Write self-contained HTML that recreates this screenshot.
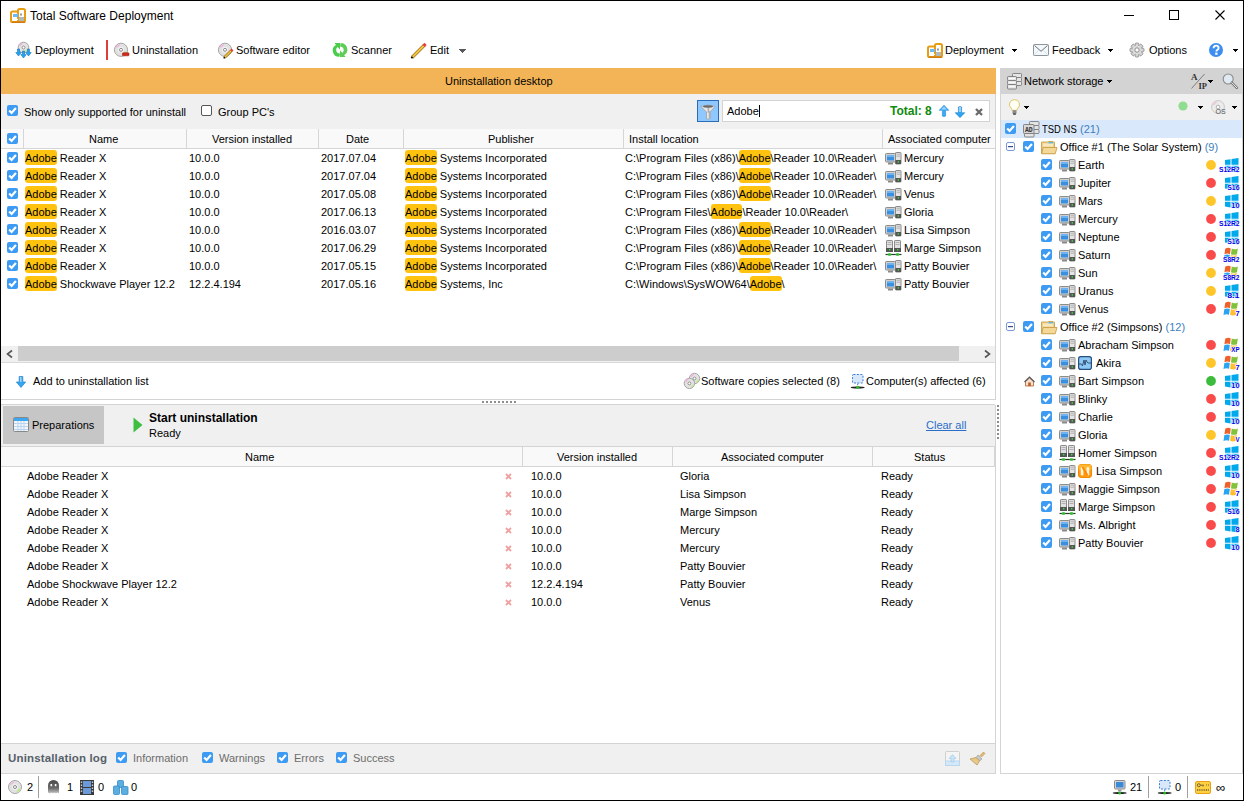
<!DOCTYPE html>
<html><head><meta charset="utf-8"><title>Total Software Deployment</title>
<style>
html,body{margin:0;padding:0;width:1244px;height:801px;overflow:hidden;background:#fff}
body{position:relative;font-family:"Liberation Sans", sans-serif;}
.r{position:absolute;box-sizing:content-box}
.t{position:absolute;white-space:nowrap;font-family:"Liberation Sans", sans-serif}
.hl{background:#ffc20e;border-radius:3px;padding:2px 0 1px 0}
svg{overflow:visible}
</style></head><body>
<div class="r" style="left:0px;top:0px;width:1244px;height:801px;background:#fff;"></div><svg class="r" style="left:10px;top:8px" width="16" height="15" viewBox="0 0 16 15"><rect x="1" y="3.5" width="8" height="10.5" rx="1.6" fill="#fff" stroke="#e89c12" stroke-width="2"/><rect x="8" y="1" width="7" height="13" rx="1.6" fill="#fff" stroke="#e89c12" stroke-width="2"/><rect x="3" y="6" width="5" height="3" fill="#6fb8f5"/><rect x="3" y="11" width="5" height="1" fill="#fff"/><rect x="10" y="5.5" width="2" height="2" fill="#999"/><rect x="9" y="9" width="5" height="4" fill="#b0b8c0"/><path d="M2 14.2 H15" stroke="#c86a10" stroke-width="1"/></svg><div class="t " style="left:30px;top:10px;font-size:12px;line-height:12px;color:#000;font-weight:normal;">Total Software Deployment</div><div class="r" style="left:1124px;top:15px;width:10px;height:1px;background:#000;"></div><div class="r" style="left:1169px;top:10px;width:8px;height:8px;border:1px solid #000"></div><svg class="r" style="left:1215px;top:10px" width="10" height="10" viewBox="0 0 10 10"><path d="M0.5 0.5 L9.5 9.5 M9.5 0.5 L0.5 9.5" stroke="#000" stroke-width="1.1"/></svg><svg class="r" style="left:14px;top:40px" width="20" height="20" viewBox="0 0 20 20"><circle cx="9.5" cy="7.5" r="5.3" fill="#e2e2e2" stroke="#a6a6a6" stroke-width="1"/><path d="M5.525 5.6450000000000005 L8.44 3.26" stroke="#f0b8e0" stroke-width="1.6"/><path d="M11.09 11.475 L13.74 8.825" stroke="#bfe890" stroke-width="1.6"/><circle cx="9.5" cy="7.5" r="2.226" fill="#f6f6f6"/><circle cx="9.5" cy="7.5" r="1.5" fill="#fff" stroke="#8a8a8a" stroke-width="1"/><g fill="#1ea6f0" stroke="#1c74c4" stroke-width="0.6"><path d="M3.5 9 H5.5 V12.5 H7.2 L4.5 16 L1.8 12.5 H3.5 Z"/><path d="M13.5 9 H15.5 V12.5 H17.2 L14.5 16 L11.8 12.5 H13.5 Z"/><path d="M8.5 11 H10.5 V14.5 H12.2 L9.5 18 L6.8 14.5 H8.5 Z"/></g></svg><div class="t " style="left:35px;top:45px;font-size:11px;line-height:11px;color:#000;font-weight:normal;">Deployment</div><div class="r" style="left:106px;top:40px;width:2px;height:20px;background:#e03c3c;"></div><svg class="r" style="left:112px;top:41px" width="20" height="18" viewBox="0 0 20 18"><circle cx="9" cy="8.8" r="6.6" fill="#e2e2e2" stroke="#a6a6a6" stroke-width="1"/><path d="M4.050000000000001 6.490000000000001 L7.68 3.5200000000000005" stroke="#f0b8e0" stroke-width="1.6"/><path d="M10.98 13.75 L14.280000000000001 10.450000000000001" stroke="#bfe890" stroke-width="1.6"/><circle cx="9" cy="8.8" r="2.772" fill="#f6f6f6"/><circle cx="9" cy="8.8" r="1.5" fill="#fff" stroke="#8a8a8a" stroke-width="1"/><rect x="10.5" y="11.8" width="6.5" height="3" rx="0.8" fill="#d42a1a" stroke="#a01a0a" stroke-width="0.6"/></svg><div class="t " style="left:132px;top:45px;font-size:11px;line-height:11px;color:#000;font-weight:normal;">Uninstallation</div><svg class="r" style="left:216px;top:41px" width="20" height="18" viewBox="0 0 20 18"><circle cx="9" cy="8.8" r="6.6" fill="#e2e2e2" stroke="#a6a6a6" stroke-width="1"/><path d="M4.050000000000001 6.490000000000001 L7.68 3.5200000000000005" stroke="#f0b8e0" stroke-width="1.6"/><path d="M10.98 13.75 L14.280000000000001 10.450000000000001" stroke="#bfe890" stroke-width="1.6"/><circle cx="9" cy="8.8" r="2.772" fill="#f6f6f6"/><circle cx="9" cy="8.8" r="1.5" fill="#fff" stroke="#8a8a8a" stroke-width="1"/><path d="M8.5 16.5 L15.5 9.5" stroke="#a07a20" stroke-width="3"/><path d="M8.5 16.5 L15.5 9.5" stroke="#f0c040" stroke-width="1.6"/><path d="M15 10 L16.5 8.5" stroke="#e04040" stroke-width="2.6"/><circle cx="8.3" cy="16.7" r="0.9" fill="#111"/></svg><div class="t " style="left:236px;top:45px;font-size:11px;line-height:11px;color:#000;font-weight:normal;">Software editor</div><svg class="r" style="left:333px;top:43px" width="14" height="14" viewBox="0 0 14 14"><path d="M7 0 H1.5 L3 2 A6.3 6.3 0 0 0 6.5 13.8 L7 10.5 A3.6 3.6 0 0 1 4.6 4 L7 6.5 Z" fill="#4ccc4c"/><path d="M7 14 H12.5 L11 12 A6.3 6.3 0 0 0 7.5 0.2 L7 3.5 A3.6 3.6 0 0 1 9.4 10 L7 7.5 Z" fill="#8ede7a"/><path d="M7 7.5 L9.4 10 A3.6 3.6 0 0 0 7.5 3.5 V0.2 A6.3 6.3 0 0 1 11 12 L12.5 14 H7 Z" fill="#3cc23c" opacity="0.6"/></svg><div class="t " style="left:351px;top:45px;font-size:11px;line-height:11px;color:#000;font-weight:normal;">Scanner</div><svg class="r" style="left:410px;top:42px" width="17" height="17" viewBox="0 0 17 17"><path d="M2 15.5 L14.5 3" stroke="#9a7218" stroke-width="3.2"/><path d="M2 15.5 L14.5 3" stroke="#f2c448" stroke-width="1.8"/><path d="M13.6 3.9 L15.6 1.9" stroke="#ee3a3a" stroke-width="3"/><path d="M1.3 16.2 L2.6 14.9" stroke="#111" stroke-width="1.8"/></svg><div class="t " style="left:430px;top:45px;font-size:11px;line-height:11px;color:#000;font-weight:normal;">Edit</div><svg class="r" style="left:459px;top:49px" width="7" height="4" viewBox="0 0 7 4"><rect x="0" y="0" width="7" height="1" fill="#585858"/><rect x="1" y="1" width="5" height="1" fill="#585858"/><rect x="2" y="2" width="3" height="1" fill="#585858"/><rect x="3" y="3" width="1" height="1" fill="#585858"/></svg><svg class="r" style="left:927px;top:43px" width="16" height="15" viewBox="0 0 16 15"><rect x="1" y="3.5" width="8" height="10.5" rx="1.6" fill="#fff" stroke="#e89c12" stroke-width="2"/><rect x="8" y="1" width="7" height="13" rx="1.6" fill="#fff" stroke="#e89c12" stroke-width="2"/><rect x="3" y="6" width="5" height="3" fill="#6fb8f5"/><rect x="3" y="11" width="5" height="1" fill="#fff"/><rect x="10" y="5.5" width="2" height="2" fill="#999"/><rect x="9" y="9" width="5" height="4" fill="#b0b8c0"/><path d="M2 14.2 H15" stroke="#c86a10" stroke-width="1"/></svg><div class="t " style="left:945px;top:45px;font-size:11px;line-height:11px;color:#000;font-weight:normal;">Deployment</div><svg class="r" style="left:1012px;top:49px" width="5" height="3" viewBox="0 0 5 3"><rect x="0" y="0" width="5" height="1" fill="#000"/><rect x="1" y="1" width="3" height="1" fill="#000"/><rect x="2" y="2" width="1" height="1" fill="#000"/></svg><svg class="r" style="left:1033px;top:44px" width="16" height="12" viewBox="0 0 16 12"><rect x="0.5" y="0.5" width="15" height="11" rx="0.8" fill="#f2f8fc" stroke="#8e9499"/><path d="M1.5 1.5 L8 7.3 L14.5 1.5" stroke="#707070" stroke-width="1" fill="none"/><path d="M1.5 10.5 L5.5 6.5 M14.5 10.5 L10.5 6.5" stroke="#c8dce8" stroke-width="0.8"/></svg><div class="t " style="left:1052px;top:45px;font-size:11px;line-height:11px;color:#000;font-weight:normal;">Feedback</div><svg class="r" style="left:1108px;top:49px" width="5" height="3" viewBox="0 0 5 3"><rect x="0" y="0" width="5" height="1" fill="#000"/><rect x="1" y="1" width="3" height="1" fill="#000"/><rect x="2" y="2" width="1" height="1" fill="#000"/></svg><svg class="r" style="left:1130px;top:43px" width="14" height="14" viewBox="0 0 14 14"><g transform="translate(7 7)"><g fill="#d2d2d2" stroke="#888" stroke-width="0.8"><rect x="-1.8" y="-7" width="3.6" height="14" rx="1"/><rect x="-1.8" y="-7" width="3.6" height="14" rx="1" transform="rotate(45)"/><rect x="-1.8" y="-7" width="3.6" height="14" rx="1" transform="rotate(90)"/><rect x="-1.8" y="-7" width="3.6" height="14" rx="1" transform="rotate(135)"/></g><circle r="4.6" fill="#dcdcdc"/><circle r="2.2" fill="#fff" stroke="#8a8a8a" stroke-width="1"/></g></svg><div class="t " style="left:1149px;top:45px;font-size:11px;line-height:11px;color:#000;font-weight:normal;">Options</div><svg class="r" style="left:1209px;top:43px" width="14" height="14" viewBox="0 0 14 14"><circle cx="7" cy="7" r="7" fill="#3d8ef0"/><path d="M4.6 5.2 Q4.6 2.6 7.1 2.6 Q9.6 2.6 9.6 4.9 Q9.6 6.2 8.1 7 Q7.4 7.4 7.4 8.4" stroke="#fff" stroke-width="1.9" fill="none"/><rect x="6.2" y="9.6" width="2.3" height="2.2" fill="#fff"/></svg><svg class="r" style="left:1233px;top:49px" width="5" height="3" viewBox="0 0 5 3"><rect x="0" y="0" width="5" height="1" fill="#000"/><rect x="1" y="1" width="3" height="1" fill="#000"/><rect x="2" y="2" width="1" height="1" fill="#000"/></svg><div class="r" style="left:1px;top:68px;width:995px;height:26px;background:#f2b457;"></div><div class="t " style="left:445px;top:76px;font-size:11px;line-height:11px;color:#000;font-weight:normal;">Uninstallation desktop</div><div class="r" style="left:1px;top:94px;width:995px;height:35px;background:#f0f0f0;"></div><div class="r" style="left:995px;top:94px;width:1px;height:306px;background:#d4d4d4;"></div><svg class="r" style="left:7px;top:105px" width="11" height="11" viewBox="0 0 11 11"><rect x="0" y="0" width="11" height="11" rx="2" fill="#3d9bf3"/><path d="M2.2 5.4 L4.6 7.9 L8.9 3" stroke="#fff" stroke-width="2.2" fill="none"/></svg><div class="t " style="left:24px;top:107px;font-size:11px;line-height:11px;color:#000;font-weight:normal;">Show only supported for uninstall</div><svg class="r" style="left:201px;top:105px" width="11" height="11" viewBox="0 0 11 11"><rect x="0.5" y="0.5" width="10" height="10" rx="1.5" fill="#fff" stroke="#555"/></svg><div class="t " style="left:218px;top:107px;font-size:11px;line-height:11px;color:#000;font-weight:normal;">Group PC's</div><div class="r" style="left:697px;top:100px;width:20px;height:20px;background:#8ec8ff;border:1px solid #2b6cb8"></div><svg class="r" style="left:700px;top:102px" width="16" height="18" viewBox="0 0 16 18"><path d="M1 4.5 Q8 1.5 15 4.5 L10 10 V16.5 Q8.5 17.8 6.5 16.5 V10 Z" fill="#e8e8e8" stroke="#9a9a9a" stroke-width="0.7"/><path d="M8.4 5.5 V10 L9.6 10 V16.5" stroke="#b0b0b0" stroke-width="1.6" fill="none"/><ellipse cx="8" cy="4.5" rx="5" ry="1.2" fill="#6a6a6a"/></svg><div class="r" style="left:722px;top:100px;width:266px;height:20px;background:#fff;border:1px solid #d3d3d3"></div><div class="t " style="left:727px;top:106px;font-size:11px;line-height:11px;color:#000;font-weight:normal;"><span style="border-right:1px solid #000;padding-right:0px">Adobe</span></div><div class="t " style="left:890px;top:105px;font-size:12px;line-height:12px;color:#108a10;font-weight:bold;">Total: 8</div><svg class="r" style="left:939px;top:105px" width="10" height="12" viewBox="0 0 10 12"><path d="M5 0.3 L9.8 5.3 H6.6 V11 Q5 12 3.4 11 V5.3 H0.2 Z" fill="#3aaaf4" stroke="#2a86d0" stroke-width="0.6"/><path d="M5 1.5 L8 4.6 H2 Z" fill="#9ad6fb"/></svg><svg class="r" style="left:955px;top:106px" width="10" height="12" viewBox="0 0 10 12"><path d="M5 11.7 L9.8 6.7 H6.6 V1 Q5 0 3.4 1 V6.7 H0.2 Z" fill="#2aa6f2" stroke="#2a80cc" stroke-width="0.6"/><rect x="4" y="1" width="2" height="5" fill="#9ad6fb"/></svg><svg class="r" style="left:975px;top:108px" width="8" height="8" viewBox="0 0 8 8"><path d="M1 1 L7 7 M7 1 L1 7" stroke="#6a6a6a" stroke-width="2.3"/></svg><div class="r" style="left:1px;top:129px;width:994px;height:19px;background:#f9f9f9;"></div><div class="r" style="left:1px;top:148px;width:994px;height:1px;background:#d5d5d5;"></div><div class="r" style="left:23px;top:129px;width:1px;height:19px;background:#d6d6d6;"></div><div class="r" style="left:186px;top:129px;width:1px;height:19px;background:#d6d6d6;"></div><div class="r" style="left:318px;top:129px;width:1px;height:19px;background:#d6d6d6;"></div><div class="r" style="left:403px;top:129px;width:1px;height:19px;background:#d6d6d6;"></div><div class="r" style="left:623px;top:129px;width:1px;height:19px;background:#d6d6d6;"></div><div class="r" style="left:882px;top:129px;width:1px;height:19px;background:#d6d6d6;"></div><svg class="r" style="left:7px;top:133px" width="11" height="11" viewBox="0 0 11 11"><rect x="0" y="0" width="11" height="11" rx="2" fill="#3d9bf3"/><path d="M2.2 5.4 L4.6 7.9 L8.9 3" stroke="#fff" stroke-width="2.2" fill="none"/></svg><div class="t " style="left:89px;top:134px;font-size:11px;line-height:11px;color:#000;font-weight:normal;">Name</div><div class="t " style="left:212px;top:134px;font-size:11px;line-height:11px;color:#000;font-weight:normal;">Version installed</div><div class="t " style="left:346px;top:134px;font-size:11px;line-height:11px;color:#000;font-weight:normal;">Date</div><div class="t " style="left:488px;top:134px;font-size:11px;line-height:11px;color:#000;font-weight:normal;">Publisher</div><div class="t " style="left:629px;top:134px;font-size:11px;line-height:11px;color:#000;font-weight:normal;">Install location</div><div class="t " style="left:888px;top:134px;font-size:11px;line-height:11px;color:#000;font-weight:normal;width:107px;overflow:hidden;white-space:nowrap;">Associated computer</div><svg class="r" style="left:7px;top:152px" width="11" height="11" viewBox="0 0 11 11"><rect x="0" y="0" width="11" height="11" rx="2" fill="#3d9bf3"/><path d="M2.2 5.4 L4.6 7.9 L8.9 3" stroke="#fff" stroke-width="2.2" fill="none"/></svg><div class="t " style="left:25px;top:153px;font-size:11px;line-height:11px;color:#000;font-weight:normal;"><span class="hl">Adobe</span> Reader X</div><div class="t " style="left:189px;top:153px;font-size:11px;line-height:11px;color:#000;font-weight:normal;">10.0.0</div><div class="t " style="left:321px;top:153px;font-size:11px;line-height:11px;color:#000;font-weight:normal;">2017.07.04</div><div class="t " style="left:405px;top:153px;font-size:11px;line-height:11px;color:#000;font-weight:normal;"><span class="hl">Adobe</span> Systems Incorporated</div><div class="t " style="left:625px;top:153px;font-size:11px;line-height:11px;color:#000;font-weight:normal;">C:\Program Files (x86)\<span class="hl">Adobe</span>\Reader 10.0\Reader\</div><svg class="r" style="left:885px;top:152px" width="17" height="14" viewBox="0 0 17 14"><rect x="0.5" y="1.5" width="10" height="8.5" rx="0.8" fill="#d0d0d0" stroke="#8c8c8c"/><rect x="2" y="3" width="7" height="5.5" fill="#3a90e0"/><rect x="2" y="3" width="7" height="2" fill="#6fb2f0"/><rect x="3" y="10.5" width="5" height="2" fill="#8a8a8a"/><rect x="10.5" y="0.5" width="5.5" height="11.5" rx="0.6" fill="#e4e4e4" stroke="#8c8c8c"/><path d="M11.5 2.2 H15 M11.5 4.2 H15" stroke="#a8a8a8" stroke-width="0.9"/><rect x="10.5" y="8" width="5.5" height="4" fill="#555"/><rect x="12.6" y="9.2" width="1.4" height="1.4" fill="#3ee03e"/></svg><div class="t " style="left:904px;top:153px;font-size:11px;line-height:11px;color:#000;font-weight:normal;">Mercury</div><svg class="r" style="left:7px;top:170px" width="11" height="11" viewBox="0 0 11 11"><rect x="0" y="0" width="11" height="11" rx="2" fill="#3d9bf3"/><path d="M2.2 5.4 L4.6 7.9 L8.9 3" stroke="#fff" stroke-width="2.2" fill="none"/></svg><div class="t " style="left:25px;top:171px;font-size:11px;line-height:11px;color:#000;font-weight:normal;"><span class="hl">Adobe</span> Reader X</div><div class="t " style="left:189px;top:171px;font-size:11px;line-height:11px;color:#000;font-weight:normal;">10.0.0</div><div class="t " style="left:321px;top:171px;font-size:11px;line-height:11px;color:#000;font-weight:normal;">2017.07.04</div><div class="t " style="left:405px;top:171px;font-size:11px;line-height:11px;color:#000;font-weight:normal;"><span class="hl">Adobe</span> Systems Incorporated</div><div class="t " style="left:625px;top:171px;font-size:11px;line-height:11px;color:#000;font-weight:normal;">C:\Program Files (x86)\<span class="hl">Adobe</span>\Reader 10.0\Reader\</div><svg class="r" style="left:885px;top:170px" width="17" height="14" viewBox="0 0 17 14"><rect x="0.5" y="1.5" width="10" height="8.5" rx="0.8" fill="#d0d0d0" stroke="#8c8c8c"/><rect x="2" y="3" width="7" height="5.5" fill="#3a90e0"/><rect x="2" y="3" width="7" height="2" fill="#6fb2f0"/><rect x="3" y="10.5" width="5" height="2" fill="#8a8a8a"/><rect x="10.5" y="0.5" width="5.5" height="11.5" rx="0.6" fill="#e4e4e4" stroke="#8c8c8c"/><path d="M11.5 2.2 H15 M11.5 4.2 H15" stroke="#a8a8a8" stroke-width="0.9"/><rect x="10.5" y="8" width="5.5" height="4" fill="#555"/><rect x="12.6" y="9.2" width="1.4" height="1.4" fill="#3ee03e"/></svg><div class="t " style="left:904px;top:171px;font-size:11px;line-height:11px;color:#000;font-weight:normal;">Mercury</div><svg class="r" style="left:7px;top:188px" width="11" height="11" viewBox="0 0 11 11"><rect x="0" y="0" width="11" height="11" rx="2" fill="#3d9bf3"/><path d="M2.2 5.4 L4.6 7.9 L8.9 3" stroke="#fff" stroke-width="2.2" fill="none"/></svg><div class="t " style="left:25px;top:189px;font-size:11px;line-height:11px;color:#000;font-weight:normal;"><span class="hl">Adobe</span> Reader X</div><div class="t " style="left:189px;top:189px;font-size:11px;line-height:11px;color:#000;font-weight:normal;">10.0.0</div><div class="t " style="left:321px;top:189px;font-size:11px;line-height:11px;color:#000;font-weight:normal;">2017.05.08</div><div class="t " style="left:405px;top:189px;font-size:11px;line-height:11px;color:#000;font-weight:normal;"><span class="hl">Adobe</span> Systems Incorporated</div><div class="t " style="left:625px;top:189px;font-size:11px;line-height:11px;color:#000;font-weight:normal;">C:\Program Files (x86)\<span class="hl">Adobe</span>\Reader 10.0\Reader\</div><svg class="r" style="left:885px;top:188px" width="17" height="14" viewBox="0 0 17 14"><rect x="0.5" y="1.5" width="10" height="8.5" rx="0.8" fill="#d0d0d0" stroke="#8c8c8c"/><rect x="2" y="3" width="7" height="5.5" fill="#3a90e0"/><rect x="2" y="3" width="7" height="2" fill="#6fb2f0"/><rect x="3" y="10.5" width="5" height="2" fill="#8a8a8a"/><rect x="10.5" y="0.5" width="5.5" height="11.5" rx="0.6" fill="#e4e4e4" stroke="#8c8c8c"/><path d="M11.5 2.2 H15 M11.5 4.2 H15" stroke="#a8a8a8" stroke-width="0.9"/><rect x="10.5" y="8" width="5.5" height="4" fill="#555"/><rect x="12.6" y="9.2" width="1.4" height="1.4" fill="#3ee03e"/></svg><div class="t " style="left:904px;top:189px;font-size:11px;line-height:11px;color:#000;font-weight:normal;">Venus</div><svg class="r" style="left:7px;top:206px" width="11" height="11" viewBox="0 0 11 11"><rect x="0" y="0" width="11" height="11" rx="2" fill="#3d9bf3"/><path d="M2.2 5.4 L4.6 7.9 L8.9 3" stroke="#fff" stroke-width="2.2" fill="none"/></svg><div class="t " style="left:25px;top:207px;font-size:11px;line-height:11px;color:#000;font-weight:normal;"><span class="hl">Adobe</span> Reader X</div><div class="t " style="left:189px;top:207px;font-size:11px;line-height:11px;color:#000;font-weight:normal;">10.0.0</div><div class="t " style="left:321px;top:207px;font-size:11px;line-height:11px;color:#000;font-weight:normal;">2017.06.13</div><div class="t " style="left:405px;top:207px;font-size:11px;line-height:11px;color:#000;font-weight:normal;"><span class="hl">Adobe</span> Systems Incorporated</div><div class="t " style="left:625px;top:207px;font-size:11px;line-height:11px;color:#000;font-weight:normal;">C:\Program Files\<span class="hl">Adobe</span>\Reader 10.0\Reader\</div><svg class="r" style="left:885px;top:206px" width="17" height="14" viewBox="0 0 17 14"><rect x="0.5" y="1.5" width="10" height="8.5" rx="0.8" fill="#d0d0d0" stroke="#8c8c8c"/><rect x="2" y="3" width="7" height="5.5" fill="#3a90e0"/><rect x="2" y="3" width="7" height="2" fill="#6fb2f0"/><rect x="3" y="10.5" width="5" height="2" fill="#8a8a8a"/><rect x="10.5" y="0.5" width="5.5" height="11.5" rx="0.6" fill="#e4e4e4" stroke="#8c8c8c"/><path d="M11.5 2.2 H15 M11.5 4.2 H15" stroke="#a8a8a8" stroke-width="0.9"/><rect x="10.5" y="8" width="5.5" height="4" fill="#555"/><rect x="12.6" y="9.2" width="1.4" height="1.4" fill="#3ee03e"/></svg><div class="t " style="left:904px;top:207px;font-size:11px;line-height:11px;color:#000;font-weight:normal;">Gloria</div><svg class="r" style="left:7px;top:224px" width="11" height="11" viewBox="0 0 11 11"><rect x="0" y="0" width="11" height="11" rx="2" fill="#3d9bf3"/><path d="M2.2 5.4 L4.6 7.9 L8.9 3" stroke="#fff" stroke-width="2.2" fill="none"/></svg><div class="t " style="left:25px;top:225px;font-size:11px;line-height:11px;color:#000;font-weight:normal;"><span class="hl">Adobe</span> Reader X</div><div class="t " style="left:189px;top:225px;font-size:11px;line-height:11px;color:#000;font-weight:normal;">10.0.0</div><div class="t " style="left:321px;top:225px;font-size:11px;line-height:11px;color:#000;font-weight:normal;">2016.03.07</div><div class="t " style="left:405px;top:225px;font-size:11px;line-height:11px;color:#000;font-weight:normal;"><span class="hl">Adobe</span> Systems Incorporated</div><div class="t " style="left:625px;top:225px;font-size:11px;line-height:11px;color:#000;font-weight:normal;">C:\Program Files (x86)\<span class="hl">Adobe</span>\Reader 10.0\Reader\</div><svg class="r" style="left:885px;top:224px" width="17" height="14" viewBox="0 0 17 14"><rect x="0.5" y="1.5" width="10" height="8.5" rx="0.8" fill="#d0d0d0" stroke="#8c8c8c"/><rect x="2" y="3" width="7" height="5.5" fill="#3a90e0"/><rect x="2" y="3" width="7" height="2" fill="#6fb2f0"/><rect x="3" y="10.5" width="5" height="2" fill="#8a8a8a"/><rect x="10.5" y="0.5" width="5.5" height="11.5" rx="0.6" fill="#e4e4e4" stroke="#8c8c8c"/><path d="M11.5 2.2 H15 M11.5 4.2 H15" stroke="#a8a8a8" stroke-width="0.9"/><rect x="10.5" y="8" width="5.5" height="4" fill="#555"/><rect x="12.6" y="9.2" width="1.4" height="1.4" fill="#3ee03e"/></svg><div class="t " style="left:904px;top:225px;font-size:11px;line-height:11px;color:#000;font-weight:normal;">Lisa Simpson</div><svg class="r" style="left:7px;top:242px" width="11" height="11" viewBox="0 0 11 11"><rect x="0" y="0" width="11" height="11" rx="2" fill="#3d9bf3"/><path d="M2.2 5.4 L4.6 7.9 L8.9 3" stroke="#fff" stroke-width="2.2" fill="none"/></svg><div class="t " style="left:25px;top:243px;font-size:11px;line-height:11px;color:#000;font-weight:normal;"><span class="hl">Adobe</span> Reader X</div><div class="t " style="left:189px;top:243px;font-size:11px;line-height:11px;color:#000;font-weight:normal;">10.0.0</div><div class="t " style="left:321px;top:243px;font-size:11px;line-height:11px;color:#000;font-weight:normal;">2017.06.29</div><div class="t " style="left:405px;top:243px;font-size:11px;line-height:11px;color:#000;font-weight:normal;"><span class="hl">Adobe</span> Systems Incorporated</div><div class="t " style="left:625px;top:243px;font-size:11px;line-height:11px;color:#000;font-weight:normal;">C:\Program Files (x86)\<span class="hl">Adobe</span>\Reader 10.0\Reader\</div><svg class="r" style="left:882px;top:240px" width="20" height="16" viewBox="0 0 20 16"><rect x="4.5" y="0.5" width="6" height="11" rx="0.6" fill="#e0e0e0" stroke="#8c8c8c"/><rect x="12.5" y="0.5" width="6" height="11" rx="0.6" fill="#e0e0e0" stroke="#8c8c8c"/><path d="M5.5 2.5 H9.5 M5.5 4.5 H9.5 M13.5 2.5 H17.5 M13.5 4.5 H17.5" stroke="#aaa" stroke-width="0.9"/><rect x="4" y="8" width="7" height="4" fill="#555"/><rect x="12" y="8" width="7" height="4" fill="#555"/><rect x="7" y="9" width="1.4" height="1.4" fill="#3ee03e"/><rect x="15" y="9" width="1.4" height="1.4" fill="#3ee03e"/><path d="M3.5 14.5 H19.5" stroke="#333" stroke-width="1.2"/><ellipse cx="7.5" cy="14.5" rx="2" ry="1.2" fill="#28b828"/><ellipse cx="15.5" cy="14.5" rx="2" ry="1.2" fill="#28b828"/></svg><div class="t " style="left:904px;top:243px;font-size:11px;line-height:11px;color:#000;font-weight:normal;">Marge Simpson</div><svg class="r" style="left:7px;top:260px" width="11" height="11" viewBox="0 0 11 11"><rect x="0" y="0" width="11" height="11" rx="2" fill="#3d9bf3"/><path d="M2.2 5.4 L4.6 7.9 L8.9 3" stroke="#fff" stroke-width="2.2" fill="none"/></svg><div class="t " style="left:25px;top:261px;font-size:11px;line-height:11px;color:#000;font-weight:normal;"><span class="hl">Adobe</span> Reader X</div><div class="t " style="left:189px;top:261px;font-size:11px;line-height:11px;color:#000;font-weight:normal;">10.0.0</div><div class="t " style="left:321px;top:261px;font-size:11px;line-height:11px;color:#000;font-weight:normal;">2017.05.15</div><div class="t " style="left:405px;top:261px;font-size:11px;line-height:11px;color:#000;font-weight:normal;"><span class="hl">Adobe</span> Systems Incorporated</div><div class="t " style="left:625px;top:261px;font-size:11px;line-height:11px;color:#000;font-weight:normal;">C:\Program Files (x86)\<span class="hl">Adobe</span>\Reader 10.0\Reader\</div><svg class="r" style="left:885px;top:260px" width="17" height="14" viewBox="0 0 17 14"><rect x="0.5" y="1.5" width="10" height="8.5" rx="0.8" fill="#d0d0d0" stroke="#8c8c8c"/><rect x="2" y="3" width="7" height="5.5" fill="#3a90e0"/><rect x="2" y="3" width="7" height="2" fill="#6fb2f0"/><rect x="3" y="10.5" width="5" height="2" fill="#8a8a8a"/><rect x="10.5" y="0.5" width="5.5" height="11.5" rx="0.6" fill="#e4e4e4" stroke="#8c8c8c"/><path d="M11.5 2.2 H15 M11.5 4.2 H15" stroke="#a8a8a8" stroke-width="0.9"/><rect x="10.5" y="8" width="5.5" height="4" fill="#555"/><rect x="12.6" y="9.2" width="1.4" height="1.4" fill="#3ee03e"/></svg><div class="t " style="left:904px;top:261px;font-size:11px;line-height:11px;color:#000;font-weight:normal;">Patty Bouvier</div><svg class="r" style="left:7px;top:278px" width="11" height="11" viewBox="0 0 11 11"><rect x="0" y="0" width="11" height="11" rx="2" fill="#3d9bf3"/><path d="M2.2 5.4 L4.6 7.9 L8.9 3" stroke="#fff" stroke-width="2.2" fill="none"/></svg><div class="t " style="left:25px;top:279px;font-size:11px;line-height:11px;color:#000;font-weight:normal;"><span class="hl">Adobe</span> Shockwave Player 12.2</div><div class="t " style="left:189px;top:279px;font-size:11px;line-height:11px;color:#000;font-weight:normal;">12.2.4.194</div><div class="t " style="left:321px;top:279px;font-size:11px;line-height:11px;color:#000;font-weight:normal;">2017.05.16</div><div class="t " style="left:405px;top:279px;font-size:11px;line-height:11px;color:#000;font-weight:normal;"><span class="hl">Adobe</span> Systems, Inc</div><div class="t " style="left:625px;top:279px;font-size:11px;line-height:11px;color:#000;font-weight:normal;">C:\Windows\SysWOW64\<span class="hl">Adobe</span>\</div><svg class="r" style="left:885px;top:278px" width="17" height="14" viewBox="0 0 17 14"><rect x="0.5" y="1.5" width="10" height="8.5" rx="0.8" fill="#d0d0d0" stroke="#8c8c8c"/><rect x="2" y="3" width="7" height="5.5" fill="#3a90e0"/><rect x="2" y="3" width="7" height="2" fill="#6fb2f0"/><rect x="3" y="10.5" width="5" height="2" fill="#8a8a8a"/><rect x="10.5" y="0.5" width="5.5" height="11.5" rx="0.6" fill="#e4e4e4" stroke="#8c8c8c"/><path d="M11.5 2.2 H15 M11.5 4.2 H15" stroke="#a8a8a8" stroke-width="0.9"/><rect x="10.5" y="8" width="5.5" height="4" fill="#555"/><rect x="12.6" y="9.2" width="1.4" height="1.4" fill="#3ee03e"/></svg><div class="t " style="left:904px;top:279px;font-size:11px;line-height:11px;color:#000;font-weight:normal;">Patty Bouvier</div><div class="r" style="left:1px;top:346px;width:994px;height:16px;background:#f0f0f0;"></div><div class="r" style="left:18px;top:346px;width:941px;height:15px;background:#cdcdcd;"></div><svg class="r" style="left:6px;top:350px" width="7" height="8" viewBox="0 0 7 8"><path d="M6 0.5 L1.5 4 L6 7.5" stroke="#555" stroke-width="1.6" fill="none"/></svg><svg class="r" style="left:984px;top:350px" width="7" height="8" viewBox="0 0 7 8"><path d="M1 0.5 L5.5 4 L1 7.5" stroke="#555" stroke-width="1.6" fill="none"/></svg><div class="r" style="left:1px;top:362px;width:994px;height:1px;background:#dadada;"></div><svg class="r" style="left:16px;top:376px" width="10" height="12" viewBox="0 0 10 12"><path d="M3.2 0.5 H6.8 V6 H9.6 L5 11.5 L0.4 6 H3.2 Z" fill="#30a8f2" stroke="#2a7cc8" stroke-width="0.7"/><rect x="4" y="1" width="1.5" height="5" fill="#9fd4fb"/></svg><div class="t " style="left:33px;top:376px;font-size:11px;line-height:11px;color:#000;font-weight:normal;">Add to uninstallation list</div><svg class="r" style="left:683px;top:372px" width="18" height="18" viewBox="0 0 18 18"><circle cx="11.5" cy="6.5" r="5.2" fill="#e2e2e2" stroke="#a6a6a6" stroke-width="1"/><path d="M7.6 4.68 L10.46 2.34" stroke="#f0b8e0" stroke-width="1.6"/><path d="M13.06 10.4 L15.66 7.8" stroke="#bfe890" stroke-width="1.6"/><circle cx="11.5" cy="6.5" r="2.184" fill="#f6f6f6"/><circle cx="11.5" cy="6.5" r="1.5" fill="#fff" stroke="#8a8a8a" stroke-width="1"/><circle cx="6.4" cy="11.4" r="5.2" fill="#e2e2e2" stroke="#a6a6a6" stroke-width="1"/><path d="M2.5 9.58 L5.36 7.24" stroke="#f0b8e0" stroke-width="1.6"/><path d="M7.960000000000001 15.3 L10.56 12.700000000000001" stroke="#bfe890" stroke-width="1.6"/><circle cx="6.4" cy="11.4" r="2.184" fill="#f6f6f6"/><circle cx="6.4" cy="11.4" r="1.5" fill="#fff" stroke="#8a8a8a" stroke-width="1"/></svg><div class="t " style="left:701px;top:376px;font-size:11px;line-height:11px;color:#000;font-weight:normal;">Software copies selected (8)</div><svg class="r" style="left:849px;top:373px" width="18" height="17" viewBox="0 0 18 17"><rect x="3.5" y="1.5" width="10.5" height="8.5" rx="1" fill="#d8e8fa" stroke="#3a7fd8" stroke-dasharray="2 1.4" stroke-width="1"/><path d="M8.7 10.5 V13" stroke="#3a7fd8" stroke-dasharray="1.5 1"/><ellipse cx="8.7" cy="14.5" rx="7" ry="1" fill="#222"/><circle cx="8.7" cy="14.3" r="1.6" fill="#28b828"/></svg><div class="t " style="left:866px;top:376px;font-size:11px;line-height:11px;color:#000;font-weight:normal;">Computer(s) affected (6)</div><div class="r" style="left:1px;top:399px;width:994px;height:1px;background:#d4d4d4;"></div><div class="r" style="left:482px;top:401px;width:2px;height:2px;background:#8c8c8c;"></div><div class="r" style="left:486px;top:401px;width:2px;height:2px;background:#8c8c8c;"></div><div class="r" style="left:490px;top:401px;width:2px;height:2px;background:#8c8c8c;"></div><div class="r" style="left:494px;top:401px;width:2px;height:2px;background:#8c8c8c;"></div><div class="r" style="left:498px;top:401px;width:2px;height:2px;background:#8c8c8c;"></div><div class="r" style="left:502px;top:401px;width:2px;height:2px;background:#8c8c8c;"></div><div class="r" style="left:506px;top:401px;width:2px;height:2px;background:#8c8c8c;"></div><div class="r" style="left:510px;top:401px;width:2px;height:2px;background:#8c8c8c;"></div><div class="r" style="left:514px;top:401px;width:2px;height:2px;background:#8c8c8c;"></div><div class="r" style="left:1px;top:404px;width:994px;height:1px;background:#d4d4d4;"></div><div class="r" style="left:997px;top:405px;width:2px;height:2px;background:#8c8c8c;"></div><div class="r" style="left:997px;top:409px;width:2px;height:2px;background:#8c8c8c;"></div><div class="r" style="left:997px;top:413px;width:2px;height:2px;background:#8c8c8c;"></div><div class="r" style="left:997px;top:417px;width:2px;height:2px;background:#8c8c8c;"></div><div class="r" style="left:997px;top:421px;width:2px;height:2px;background:#8c8c8c;"></div><div class="r" style="left:997px;top:425px;width:2px;height:2px;background:#8c8c8c;"></div><div class="r" style="left:997px;top:429px;width:2px;height:2px;background:#8c8c8c;"></div><div class="r" style="left:997px;top:433px;width:2px;height:2px;background:#8c8c8c;"></div><div class="r" style="left:997px;top:437px;width:2px;height:2px;background:#8c8c8c;"></div><div class="r" style="left:1px;top:405px;width:994px;height:41px;background:#f0f0f0;"></div><div class="r" style="left:3px;top:406px;width:101px;height:38px;background:#c6c6c6;"></div><svg class="r" style="left:13px;top:417px" width="16" height="15" viewBox="0 0 16 15"><rect x="0.5" y="0.5" width="15" height="14" rx="1" fill="#f2f6fb" stroke="#888"/><rect x="1" y="1" width="14" height="3" fill="#3fa6f0"/><g stroke="#b8d4ee" stroke-width="1"><path d="M1 6.5 H15 M1 9.5 H15 M1 12.5 H15 M5 4 V14 M8 4 V14 M11 4 V14"/></g></svg><div class="t " style="left:32px;top:420px;font-size:11px;line-height:11px;color:#000;font-weight:normal;">Preparations</div><svg class="r" style="left:133px;top:417px" width="10" height="16" viewBox="0 0 10 16"><path d="M0.5 0.5 L9.5 8 L0.5 15.5 Z" fill="#3fbf3f"/></svg><div class="t " style="left:149px;top:412px;font-size:12px;line-height:12px;color:#000;font-weight:bold;">Start uninstallation</div><div class="t " style="left:149px;top:428px;font-size:11px;line-height:11px;color:#000;font-weight:normal;">Ready</div><div class="t " style="left:926px;top:420px;font-size:11px;line-height:11px;color:#2a6fc9;font-weight:normal;text-decoration:underline;">Clear all</div><div class="r" style="left:1px;top:446px;width:994px;height:1px;background:#d4d4d4;"></div><div class="r" style="left:1px;top:447px;width:994px;height:19px;background:#f9f9f9;"></div><div class="r" style="left:1px;top:466px;width:994px;height:1px;background:#d5d5d5;"></div><div class="r" style="left:522px;top:447px;width:1px;height:19px;background:#d6d6d6;"></div><div class="r" style="left:672px;top:447px;width:1px;height:19px;background:#d6d6d6;"></div><div class="r" style="left:872px;top:447px;width:1px;height:19px;background:#d6d6d6;"></div><div class="r" style="left:994px;top:447px;width:1px;height:19px;background:#d6d6d6;"></div><div class="t " style="left:245px;top:452px;font-size:11px;line-height:11px;color:#000;font-weight:normal;">Name</div><div class="t " style="left:557px;top:452px;font-size:11px;line-height:11px;color:#000;font-weight:normal;">Version installed</div><div class="t " style="left:721px;top:452px;font-size:11px;line-height:11px;color:#000;font-weight:normal;">Associated computer</div><div class="t " style="left:914px;top:452px;font-size:11px;line-height:11px;color:#000;font-weight:normal;">Status</div><div class="t " style="left:27px;top:471px;font-size:11px;line-height:11px;color:#000;font-weight:normal;">Adobe Reader X</div><svg class="r" style="left:505px;top:473px" width="7" height="7" viewBox="0 0 7 7"><path d="M1 1 L6 6 M6 1 L1 6" stroke="#f0a0a0" stroke-width="1.8"/></svg><div class="t " style="left:531px;top:471px;font-size:11px;line-height:11px;color:#000;font-weight:normal;">10.0.0</div><div class="t " style="left:680px;top:471px;font-size:11px;line-height:11px;color:#000;font-weight:normal;">Gloria</div><div class="t " style="left:881px;top:471px;font-size:11px;line-height:11px;color:#000;font-weight:normal;">Ready</div><div class="t " style="left:27px;top:489px;font-size:11px;line-height:11px;color:#000;font-weight:normal;">Adobe Reader X</div><svg class="r" style="left:505px;top:491px" width="7" height="7" viewBox="0 0 7 7"><path d="M1 1 L6 6 M6 1 L1 6" stroke="#f0a0a0" stroke-width="1.8"/></svg><div class="t " style="left:531px;top:489px;font-size:11px;line-height:11px;color:#000;font-weight:normal;">10.0.0</div><div class="t " style="left:680px;top:489px;font-size:11px;line-height:11px;color:#000;font-weight:normal;">Lisa Simpson</div><div class="t " style="left:881px;top:489px;font-size:11px;line-height:11px;color:#000;font-weight:normal;">Ready</div><div class="t " style="left:27px;top:507px;font-size:11px;line-height:11px;color:#000;font-weight:normal;">Adobe Reader X</div><svg class="r" style="left:505px;top:509px" width="7" height="7" viewBox="0 0 7 7"><path d="M1 1 L6 6 M6 1 L1 6" stroke="#f0a0a0" stroke-width="1.8"/></svg><div class="t " style="left:531px;top:507px;font-size:11px;line-height:11px;color:#000;font-weight:normal;">10.0.0</div><div class="t " style="left:680px;top:507px;font-size:11px;line-height:11px;color:#000;font-weight:normal;">Marge Simpson</div><div class="t " style="left:881px;top:507px;font-size:11px;line-height:11px;color:#000;font-weight:normal;">Ready</div><div class="t " style="left:27px;top:525px;font-size:11px;line-height:11px;color:#000;font-weight:normal;">Adobe Reader X</div><svg class="r" style="left:505px;top:527px" width="7" height="7" viewBox="0 0 7 7"><path d="M1 1 L6 6 M6 1 L1 6" stroke="#f0a0a0" stroke-width="1.8"/></svg><div class="t " style="left:531px;top:525px;font-size:11px;line-height:11px;color:#000;font-weight:normal;">10.0.0</div><div class="t " style="left:680px;top:525px;font-size:11px;line-height:11px;color:#000;font-weight:normal;">Mercury</div><div class="t " style="left:881px;top:525px;font-size:11px;line-height:11px;color:#000;font-weight:normal;">Ready</div><div class="t " style="left:27px;top:543px;font-size:11px;line-height:11px;color:#000;font-weight:normal;">Adobe Reader X</div><svg class="r" style="left:505px;top:545px" width="7" height="7" viewBox="0 0 7 7"><path d="M1 1 L6 6 M6 1 L1 6" stroke="#f0a0a0" stroke-width="1.8"/></svg><div class="t " style="left:531px;top:543px;font-size:11px;line-height:11px;color:#000;font-weight:normal;">10.0.0</div><div class="t " style="left:680px;top:543px;font-size:11px;line-height:11px;color:#000;font-weight:normal;">Mercury</div><div class="t " style="left:881px;top:543px;font-size:11px;line-height:11px;color:#000;font-weight:normal;">Ready</div><div class="t " style="left:27px;top:561px;font-size:11px;line-height:11px;color:#000;font-weight:normal;">Adobe Reader X</div><svg class="r" style="left:505px;top:563px" width="7" height="7" viewBox="0 0 7 7"><path d="M1 1 L6 6 M6 1 L1 6" stroke="#f0a0a0" stroke-width="1.8"/></svg><div class="t " style="left:531px;top:561px;font-size:11px;line-height:11px;color:#000;font-weight:normal;">10.0.0</div><div class="t " style="left:680px;top:561px;font-size:11px;line-height:11px;color:#000;font-weight:normal;">Patty Bouvier</div><div class="t " style="left:881px;top:561px;font-size:11px;line-height:11px;color:#000;font-weight:normal;">Ready</div><div class="t " style="left:27px;top:579px;font-size:11px;line-height:11px;color:#000;font-weight:normal;">Adobe Shockwave Player 12.2</div><svg class="r" style="left:505px;top:581px" width="7" height="7" viewBox="0 0 7 7"><path d="M1 1 L6 6 M6 1 L1 6" stroke="#f0a0a0" stroke-width="1.8"/></svg><div class="t " style="left:531px;top:579px;font-size:11px;line-height:11px;color:#000;font-weight:normal;">12.2.4.194</div><div class="t " style="left:680px;top:579px;font-size:11px;line-height:11px;color:#000;font-weight:normal;">Patty Bouvier</div><div class="t " style="left:881px;top:579px;font-size:11px;line-height:11px;color:#000;font-weight:normal;">Ready</div><div class="t " style="left:27px;top:597px;font-size:11px;line-height:11px;color:#000;font-weight:normal;">Adobe Reader X</div><svg class="r" style="left:505px;top:599px" width="7" height="7" viewBox="0 0 7 7"><path d="M1 1 L6 6 M6 1 L1 6" stroke="#f0a0a0" stroke-width="1.8"/></svg><div class="t " style="left:531px;top:597px;font-size:11px;line-height:11px;color:#000;font-weight:normal;">10.0.0</div><div class="t " style="left:680px;top:597px;font-size:11px;line-height:11px;color:#000;font-weight:normal;">Venus</div><div class="t " style="left:881px;top:597px;font-size:11px;line-height:11px;color:#000;font-weight:normal;">Ready</div><div class="r" style="left:995px;top:405px;width:1px;height:369px;background:#d4d4d4;"></div><div class="r" style="left:1px;top:743px;width:994px;height:1px;background:#d4d4d4;"></div><div class="r" style="left:1px;top:744px;width:994px;height:29px;background:#f0f0f0;"></div><div class="t " style="left:8px;top:753px;font-size:11.5px;line-height:11.5px;color:#56606a;font-weight:bold;letter-spacing:0.15px;">Uninstallation log</div><svg class="r" style="left:116px;top:752px" width="11" height="11" viewBox="0 0 11 11"><rect x="0" y="0" width="11" height="11" rx="2" fill="#3d9bf3"/><path d="M2.2 5.4 L4.6 7.9 L8.9 3" stroke="#fff" stroke-width="2.2" fill="none"/></svg><div class="t " style="left:133px;top:753px;font-size:11px;line-height:11px;color:#6d6d6d;font-weight:normal;">Information</div><svg class="r" style="left:202px;top:752px" width="11" height="11" viewBox="0 0 11 11"><rect x="0" y="0" width="11" height="11" rx="2" fill="#3d9bf3"/><path d="M2.2 5.4 L4.6 7.9 L8.9 3" stroke="#fff" stroke-width="2.2" fill="none"/></svg><div class="t " style="left:219px;top:753px;font-size:11px;line-height:11px;color:#6d6d6d;font-weight:normal;">Warnings</div><svg class="r" style="left:277px;top:752px" width="11" height="11" viewBox="0 0 11 11"><rect x="0" y="0" width="11" height="11" rx="2" fill="#3d9bf3"/><path d="M2.2 5.4 L4.6 7.9 L8.9 3" stroke="#fff" stroke-width="2.2" fill="none"/></svg><div class="t " style="left:294px;top:753px;font-size:11px;line-height:11px;color:#6d6d6d;font-weight:normal;">Errors</div><svg class="r" style="left:336px;top:752px" width="11" height="11" viewBox="0 0 11 11"><rect x="0" y="0" width="11" height="11" rx="2" fill="#3d9bf3"/><path d="M2.2 5.4 L4.6 7.9 L8.9 3" stroke="#fff" stroke-width="2.2" fill="none"/></svg><div class="t " style="left:353px;top:753px;font-size:11px;line-height:11px;color:#6d6d6d;font-weight:normal;">Success</div><svg class="r" style="left:945px;top:751px" width="15" height="15" viewBox="0 0 15 15"><rect x="0.5" y="0.5" width="14" height="14" rx="1" fill="#f4f4f4" stroke="#d0d0d0"/><rect x="0.5" y="10" width="14" height="4.5" fill="#d4e8f8" stroke="#b8d8f0"/><path d="M7.5 3.5 L11 7.5 H9 V11 H6 V7.5 H4 Z" fill="#c8e4f8" stroke="#a8cce8" stroke-width="0.7"/></svg><svg class="r" style="left:969px;top:751px" width="17" height="15" viewBox="0 0 17 15"><path d="M11 4.5 L14.5 1 L16 2.5 L12.5 6 Z" fill="#e0b870" stroke="#b89048" stroke-width="0.6"/><path d="M9 4 L13 8 L10.5 10 L7 6.5 Z" fill="#c8c8c8" stroke="#888" stroke-width="0.5"/><path d="M7 6.5 L10.5 10 L8 14 L1 8 Z" fill="#e8c88a" stroke="#b89048" stroke-width="0.7"/></svg><div class="r" style="left:1px;top:773px;width:995px;height:1px;background:#d4d4d4;"></div><div class="r" style="left:1000px;top:773px;width:243px;height:1px;background:#d4d4d4;"></div><div class="r" style="left:1000px;top:68px;width:1px;height:706px;background:#d4d4d4;"></div><div class="r" style="left:1242px;top:68px;width:1px;height:706px;background:#d4d4d4;"></div><div class="r" style="left:1001px;top:68px;width:241px;height:26px;background:#d3d3d3;"></div><svg class="r" style="left:1007px;top:73px" width="15" height="17" viewBox="0 0 15 17"><g fill="#e6e6e6" stroke="#7a7a7a" stroke-width="0.9"><rect x="5.5" y="0.5" width="9" height="4" rx="0.8"/><rect x="5.5" y="4.5" width="9" height="4" rx="0.8"/><rect x="5.5" y="8.5" width="9" height="4" rx="0.8"/><rect x="0.5" y="3.5" width="9" height="4" rx="0.8"/><rect x="0.5" y="7.5" width="9" height="4" rx="0.8"/><rect x="0.5" y="11.5" width="9" height="4.5" rx="0.8"/></g><g stroke="#fff" stroke-width="0.8"><path d="M2 5.5 H8 M2 9.5 H8 M2 13.7 H8"/></g></svg><div class="t " style="left:1024px;top:76px;font-size:11px;line-height:11px;color:#000;font-weight:normal;letter-spacing:-0.05px">Network storage</div><svg class="r" style="left:1107px;top:80px" width="5" height="3" viewBox="0 0 5 3"><rect x="0" y="0" width="5" height="1" fill="#000"/><rect x="1" y="1" width="3" height="1" fill="#000"/><rect x="2" y="2" width="1" height="1" fill="#000"/></svg><svg class="r" style="left:1190px;top:72px" width="24" height="18" viewBox="0 0 24 18"><text x="1" y="8" font-family="Liberation Serif" font-weight="bold" font-size="9" fill="#333">A</text><path d="M1.5 16.5 L14.5 2" stroke="#666" stroke-width="0.8"/><text x="8.5" y="17" font-family="Liberation Serif" font-weight="bold" font-size="8.5" fill="#333">IP</text><rect x="18" y="8" width="5" height="1" fill="#000"/><rect x="19" y="9" width="3" height="1" fill="#000"/><rect x="20" y="10" width="1" height="1" fill="#000"/></svg><svg class="r" style="left:1222px;top:73px" width="17" height="17" viewBox="0 0 17 17"><circle cx="6.2" cy="6" r="5" fill="#dfeaf2" stroke="#8a8a8a" stroke-width="1.1"/><path d="M9.8 9.6 L14.8 14.8" stroke="#777" stroke-width="2.6" stroke-linecap="round"/><path d="M9.8 9.6 L14.8 14.8" stroke="#eee" stroke-width="1" stroke-linecap="round"/></svg><div class="r" style="left:1001px;top:94px;width:241px;height:26px;background:#f0f0f0;"></div><svg class="r" style="left:1009px;top:99px" width="12" height="16" viewBox="0 0 12 16"><path d="M5.5 0.6 A4.9 4.9 0 0 1 8.6 9.4 L8 11.3 H3 L2.4 9.4 A4.9 4.9 0 0 1 5.5 0.6 Z" fill="#fffff4" stroke="#dcc46a" stroke-width="1"/><rect x="3.5" y="11.3" width="4" height="3.5" rx="0.6" fill="#8a8a8a"/><rect x="4.2" y="14.5" width="2.6" height="1.2" fill="#222"/></svg><svg class="r" style="left:1024px;top:106px" width="5" height="3" viewBox="0 0 5 3"><rect x="0" y="0" width="5" height="1" fill="#000"/><rect x="1" y="1" width="3" height="1" fill="#000"/><rect x="2" y="2" width="1" height="1" fill="#000"/></svg><svg class="r" style="left:1178px;top:101px" width="10" height="10" viewBox="0 0 10 10"><circle cx="5" cy="5" r="4.6" fill="#90dc90"/></svg><svg class="r" style="left:1198px;top:106px" width="5" height="3" viewBox="0 0 5 3"><rect x="0" y="0" width="5" height="1" fill="#000"/><rect x="1" y="1" width="3" height="1" fill="#000"/><rect x="2" y="2" width="1" height="1" fill="#000"/></svg><svg class="r" style="left:1211px;top:100px" width="15" height="15" viewBox="0 0 15 15"><circle cx="7" cy="7" r="6.4" fill="#ececec" stroke="#c8c8c8" stroke-width="1"/><path d="M2.1999999999999993 4.76 L5.72 1.879999999999999" stroke="#f2c8d8" stroke-width="1.6"/><circle cx="7" cy="7" r="1.8" fill="#fff" stroke="#aaa" stroke-width="0.9"/><text x="9.5" y="13.5" font-family="Liberation Sans" font-size="7" fill="#555" text-anchor="middle">OS</text></svg><svg class="r" style="left:1232px;top:106px" width="5" height="3" viewBox="0 0 5 3"><rect x="0" y="0" width="5" height="1" fill="#000"/><rect x="1" y="1" width="3" height="1" fill="#000"/><rect x="2" y="2" width="1" height="1" fill="#000"/></svg><div class="r" style="left:1001px;top:120px;width:241px;height:18px;background:#d9e8fa;"></div><svg class="r" style="left:1005px;top:123px" width="11" height="11" viewBox="0 0 11 11"><rect x="0" y="0" width="11" height="11" rx="2" fill="#3d9bf3"/><path d="M2.2 5.4 L4.6 7.9 L8.9 3" stroke="#fff" stroke-width="2.2" fill="none"/></svg><svg class="r" style="left:1023px;top:121px" width="17" height="17" viewBox="0 0 17 17"><g fill="#e4e4e4" stroke="#7a7a7a" stroke-width="0.9"><rect x="6.5" y="0.5" width="9.5" height="4" rx="0.8"/><rect x="6.5" y="4.5" width="9.5" height="4" rx="0.8"/><rect x="6.5" y="8.5" width="9.5" height="4" rx="0.8"/><rect x="1.5" y="12.5" width="9.5" height="3.5" rx="0.8"/><rect x="0.5" y="3.5" width="10.5" height="9" rx="0.8" fill="#d8d8d8"/></g><text x="5.8" y="10.6" font-family="Liberation Mono" font-weight="bold" font-size="6.5" fill="#333" text-anchor="middle">AD</text></svg><div class="t " style="left:1042px;top:124px;font-size:11px;line-height:11px;color:#000;font-weight:normal;transform:scaleX(0.86);transform-origin:0 0;">TSD NS</div><div class="t " style="left:1080px;top:124px;font-size:11px;line-height:11px;color:#000;font-weight:normal;"><span style="color:#3d7fc0">(21)</span></div><svg class="r" style="left:1006px;top:142px" width="9" height="9" viewBox="0 0 9 9"><rect x="0.5" y="0.5" width="8" height="8" rx="1.5" fill="#fff" stroke="#7a9ad8"/><rect x="2" y="4" width="5" height="1.2" fill="#3a4a8a"/></svg><svg class="r" style="left:1023px;top:141px" width="11" height="11" viewBox="0 0 11 11"><rect x="0" y="0" width="11" height="11" rx="2" fill="#3d9bf3"/><path d="M2.2 5.4 L4.6 7.9 L8.9 3" stroke="#fff" stroke-width="2.2" fill="none"/></svg><svg class="r" style="left:1041px;top:141px" width="17" height="14" viewBox="0 0 17 14"><path d="M0.5 1 H6.5 L7.5 0.5 H12 L12.5 1 H13.5 V12.5 H0.5 Z" fill="#f0d088" stroke="#c8a04a" stroke-width="0.9"/><rect x="7.5" y="1.2" width="4.5" height="1.6" fill="#3cb4f0"/><rect x="2" y="2.5" width="10" height="3" fill="#f8e8c0"/><path d="M0.8 12.8 L2 6.5 H16 L14.2 12.8 Z" fill="#f4d898" stroke="#c8a04a" stroke-width="0.9"/></svg><div class="t " style="left:1060px;top:142px;font-size:11px;line-height:11px;color:#000;font-weight:normal;">Office #1 (The Solar System) <span style="color:#3d7fc0">(9)</span></div><svg class="r" style="left:1041px;top:159px" width="11" height="11" viewBox="0 0 11 11"><rect x="0" y="0" width="11" height="11" rx="2" fill="#3d9bf3"/><path d="M2.2 5.4 L4.6 7.9 L8.9 3" stroke="#fff" stroke-width="2.2" fill="none"/></svg><svg class="r" style="left:1059px;top:159px" width="17" height="14" viewBox="0 0 17 14"><rect x="0.5" y="1.5" width="10" height="8.5" rx="0.8" fill="#d0d0d0" stroke="#8c8c8c"/><rect x="2" y="3" width="7" height="5.5" fill="#3a90e0"/><rect x="2" y="3" width="7" height="2" fill="#6fb2f0"/><rect x="3" y="10.5" width="5" height="2" fill="#8a8a8a"/><rect x="10.5" y="0.5" width="5.5" height="11.5" rx="0.6" fill="#e4e4e4" stroke="#8c8c8c"/><path d="M11.5 2.2 H15 M11.5 4.2 H15" stroke="#a8a8a8" stroke-width="0.9"/><rect x="10.5" y="8" width="5.5" height="4" fill="#555"/><rect x="12.6" y="9.2" width="1.4" height="1.4" fill="#3ee03e"/></svg><div class="t " style="left:1078px;top:160px;font-size:11px;line-height:11px;color:#000;font-weight:normal;">Earth</div><svg class="r" style="left:1206px;top:160px" width="10" height="10" viewBox="0 0 10 10"><circle cx="5" cy="5" r="4.9" fill="#ffc62a"/></svg><svg class="r" style="left:1218px;top:156px" width="24" height="17" viewBox="0 0 24 17"><g transform="translate(7 2)" fill="#00a8ec"><path d="M0 2 L5.5 1.2 V6.8 H0 Z"/><path d="M6.5 1 L13.5 0 V6.8 H6.5 Z"/><path d="M0 7.8 H5.5 V13.4 L0 12.6 Z"/><path d="M6.5 7.8 H13.5 V14.4 L6.5 13.5 Z"/></g><text x="21.5" y="16" font-family="Liberation Sans" font-weight="bold" font-size="7" fill="#0000f0" text-anchor="end" stroke="#fff" stroke-width="1.2" paint-order="stroke" textLength="20.5" lengthAdjust="spacingAndGlyphs">S12R2</text></svg><svg class="r" style="left:1041px;top:177px" width="11" height="11" viewBox="0 0 11 11"><rect x="0" y="0" width="11" height="11" rx="2" fill="#3d9bf3"/><path d="M2.2 5.4 L4.6 7.9 L8.9 3" stroke="#fff" stroke-width="2.2" fill="none"/></svg><svg class="r" style="left:1059px;top:177px" width="17" height="14" viewBox="0 0 17 14"><rect x="0.5" y="1.5" width="10" height="8.5" rx="0.8" fill="#d0d0d0" stroke="#8c8c8c"/><rect x="2" y="3" width="7" height="5.5" fill="#3a90e0"/><rect x="2" y="3" width="7" height="2" fill="#6fb2f0"/><rect x="3" y="10.5" width="5" height="2" fill="#8a8a8a"/><rect x="10.5" y="0.5" width="5.5" height="11.5" rx="0.6" fill="#e4e4e4" stroke="#8c8c8c"/><path d="M11.5 2.2 H15 M11.5 4.2 H15" stroke="#a8a8a8" stroke-width="0.9"/><rect x="10.5" y="8" width="5.5" height="4" fill="#555"/><rect x="12.6" y="9.2" width="1.4" height="1.4" fill="#3ee03e"/></svg><div class="t " style="left:1078px;top:178px;font-size:11px;line-height:11px;color:#000;font-weight:normal;">Jupiter</div><svg class="r" style="left:1206px;top:178px" width="10" height="10" viewBox="0 0 10 10"><circle cx="5" cy="5" r="4.9" fill="#fb4a4a"/></svg><svg class="r" style="left:1218px;top:174px" width="24" height="17" viewBox="0 0 24 17"><g transform="translate(7 2)" fill="#00a8ec"><path d="M0 2 L5.5 1.2 V6.8 H0 Z"/><path d="M6.5 1 L13.5 0 V6.8 H6.5 Z"/><path d="M0 7.8 H5.5 V13.4 L0 12.6 Z"/><path d="M6.5 7.8 H13.5 V14.4 L6.5 13.5 Z"/></g><text x="21.5" y="16" font-family="Liberation Sans" font-weight="bold" font-size="7" fill="#0000f0" text-anchor="end" stroke="#fff" stroke-width="1.2" paint-order="stroke" textLength="12.299999999999999" lengthAdjust="spacingAndGlyphs">S16</text></svg><svg class="r" style="left:1041px;top:195px" width="11" height="11" viewBox="0 0 11 11"><rect x="0" y="0" width="11" height="11" rx="2" fill="#3d9bf3"/><path d="M2.2 5.4 L4.6 7.9 L8.9 3" stroke="#fff" stroke-width="2.2" fill="none"/></svg><svg class="r" style="left:1059px;top:195px" width="17" height="14" viewBox="0 0 17 14"><rect x="0.5" y="1.5" width="10" height="8.5" rx="0.8" fill="#d0d0d0" stroke="#8c8c8c"/><rect x="2" y="3" width="7" height="5.5" fill="#3a90e0"/><rect x="2" y="3" width="7" height="2" fill="#6fb2f0"/><rect x="3" y="10.5" width="5" height="2" fill="#8a8a8a"/><rect x="10.5" y="0.5" width="5.5" height="11.5" rx="0.6" fill="#e4e4e4" stroke="#8c8c8c"/><path d="M11.5 2.2 H15 M11.5 4.2 H15" stroke="#a8a8a8" stroke-width="0.9"/><rect x="10.5" y="8" width="5.5" height="4" fill="#555"/><rect x="12.6" y="9.2" width="1.4" height="1.4" fill="#3ee03e"/></svg><div class="t " style="left:1078px;top:196px;font-size:11px;line-height:11px;color:#000;font-weight:normal;">Mars</div><svg class="r" style="left:1206px;top:196px" width="10" height="10" viewBox="0 0 10 10"><circle cx="5" cy="5" r="4.9" fill="#ffc62a"/></svg><svg class="r" style="left:1218px;top:192px" width="24" height="17" viewBox="0 0 24 17"><g transform="translate(7 2)" fill="#00a8ec"><path d="M0 2 L5.5 1.2 V6.8 H0 Z"/><path d="M6.5 1 L13.5 0 V6.8 H6.5 Z"/><path d="M0 7.8 H5.5 V13.4 L0 12.6 Z"/><path d="M6.5 7.8 H13.5 V14.4 L6.5 13.5 Z"/></g><text x="21.5" y="16" font-family="Liberation Sans" font-weight="bold" font-size="7" fill="#0000f0" text-anchor="end" stroke="#fff" stroke-width="1.2" paint-order="stroke" textLength="8.2" lengthAdjust="spacingAndGlyphs">10</text></svg><svg class="r" style="left:1041px;top:213px" width="11" height="11" viewBox="0 0 11 11"><rect x="0" y="0" width="11" height="11" rx="2" fill="#3d9bf3"/><path d="M2.2 5.4 L4.6 7.9 L8.9 3" stroke="#fff" stroke-width="2.2" fill="none"/></svg><svg class="r" style="left:1059px;top:213px" width="17" height="14" viewBox="0 0 17 14"><rect x="0.5" y="1.5" width="10" height="8.5" rx="0.8" fill="#d0d0d0" stroke="#8c8c8c"/><rect x="2" y="3" width="7" height="5.5" fill="#3a90e0"/><rect x="2" y="3" width="7" height="2" fill="#6fb2f0"/><rect x="3" y="10.5" width="5" height="2" fill="#8a8a8a"/><rect x="10.5" y="0.5" width="5.5" height="11.5" rx="0.6" fill="#e4e4e4" stroke="#8c8c8c"/><path d="M11.5 2.2 H15 M11.5 4.2 H15" stroke="#a8a8a8" stroke-width="0.9"/><rect x="10.5" y="8" width="5.5" height="4" fill="#555"/><rect x="12.6" y="9.2" width="1.4" height="1.4" fill="#3ee03e"/></svg><div class="t " style="left:1078px;top:214px;font-size:11px;line-height:11px;color:#000;font-weight:normal;">Mercury</div><svg class="r" style="left:1206px;top:214px" width="10" height="10" viewBox="0 0 10 10"><circle cx="5" cy="5" r="4.9" fill="#fb4a4a"/></svg><svg class="r" style="left:1218px;top:210px" width="24" height="17" viewBox="0 0 24 17"><g transform="translate(7 2)" fill="#00a8ec"><path d="M0 2 L5.5 1.2 V6.8 H0 Z"/><path d="M6.5 1 L13.5 0 V6.8 H6.5 Z"/><path d="M0 7.8 H5.5 V13.4 L0 12.6 Z"/><path d="M6.5 7.8 H13.5 V14.4 L6.5 13.5 Z"/></g><text x="21.5" y="16" font-family="Liberation Sans" font-weight="bold" font-size="7" fill="#0000f0" text-anchor="end" stroke="#fff" stroke-width="1.2" paint-order="stroke" textLength="20.5" lengthAdjust="spacingAndGlyphs">S12R2</text></svg><svg class="r" style="left:1041px;top:231px" width="11" height="11" viewBox="0 0 11 11"><rect x="0" y="0" width="11" height="11" rx="2" fill="#3d9bf3"/><path d="M2.2 5.4 L4.6 7.9 L8.9 3" stroke="#fff" stroke-width="2.2" fill="none"/></svg><svg class="r" style="left:1059px;top:231px" width="17" height="14" viewBox="0 0 17 14"><rect x="0.5" y="1.5" width="10" height="8.5" rx="0.8" fill="#d0d0d0" stroke="#8c8c8c"/><rect x="2" y="3" width="7" height="5.5" fill="#3a90e0"/><rect x="2" y="3" width="7" height="2" fill="#6fb2f0"/><rect x="3" y="10.5" width="5" height="2" fill="#8a8a8a"/><rect x="10.5" y="0.5" width="5.5" height="11.5" rx="0.6" fill="#e4e4e4" stroke="#8c8c8c"/><path d="M11.5 2.2 H15 M11.5 4.2 H15" stroke="#a8a8a8" stroke-width="0.9"/><rect x="10.5" y="8" width="5.5" height="4" fill="#555"/><rect x="12.6" y="9.2" width="1.4" height="1.4" fill="#3ee03e"/></svg><div class="t " style="left:1078px;top:232px;font-size:11px;line-height:11px;color:#000;font-weight:normal;">Neptune</div><svg class="r" style="left:1206px;top:232px" width="10" height="10" viewBox="0 0 10 10"><circle cx="5" cy="5" r="4.9" fill="#fb4a4a"/></svg><svg class="r" style="left:1218px;top:228px" width="24" height="17" viewBox="0 0 24 17"><g transform="translate(7 2)" fill="#00a8ec"><path d="M0 2 L5.5 1.2 V6.8 H0 Z"/><path d="M6.5 1 L13.5 0 V6.8 H6.5 Z"/><path d="M0 7.8 H5.5 V13.4 L0 12.6 Z"/><path d="M6.5 7.8 H13.5 V14.4 L6.5 13.5 Z"/></g><text x="21.5" y="16" font-family="Liberation Sans" font-weight="bold" font-size="7" fill="#0000f0" text-anchor="end" stroke="#fff" stroke-width="1.2" paint-order="stroke" textLength="12.299999999999999" lengthAdjust="spacingAndGlyphs">S16</text></svg><svg class="r" style="left:1041px;top:249px" width="11" height="11" viewBox="0 0 11 11"><rect x="0" y="0" width="11" height="11" rx="2" fill="#3d9bf3"/><path d="M2.2 5.4 L4.6 7.9 L8.9 3" stroke="#fff" stroke-width="2.2" fill="none"/></svg><svg class="r" style="left:1059px;top:249px" width="17" height="14" viewBox="0 0 17 14"><rect x="0.5" y="1.5" width="10" height="8.5" rx="0.8" fill="#d0d0d0" stroke="#8c8c8c"/><rect x="2" y="3" width="7" height="5.5" fill="#3a90e0"/><rect x="2" y="3" width="7" height="2" fill="#6fb2f0"/><rect x="3" y="10.5" width="5" height="2" fill="#8a8a8a"/><rect x="10.5" y="0.5" width="5.5" height="11.5" rx="0.6" fill="#e4e4e4" stroke="#8c8c8c"/><path d="M11.5 2.2 H15 M11.5 4.2 H15" stroke="#a8a8a8" stroke-width="0.9"/><rect x="10.5" y="8" width="5.5" height="4" fill="#555"/><rect x="12.6" y="9.2" width="1.4" height="1.4" fill="#3ee03e"/></svg><div class="t " style="left:1078px;top:250px;font-size:11px;line-height:11px;color:#000;font-weight:normal;">Saturn</div><svg class="r" style="left:1206px;top:250px" width="10" height="10" viewBox="0 0 10 10"><circle cx="5" cy="5" r="4.9" fill="#fb4a4a"/></svg><svg class="r" style="left:1218px;top:246px" width="24" height="17" viewBox="0 0 24 17"><g transform="translate(5.5 1) scale(1.15)"><path d="M1.5 1.5 Q4 0 6.3 1.2 L5.6 6.2 Q3.3 5 0.8 6.4 Z" fill="#f0602a"/><path d="M7.2 1.4 Q9.6 2.6 12.5 1.2 L11.7 6.2 Q9 7.4 6.5 6.2 Z" fill="#80c23a"/><path d="M0.7 7.2 Q3.2 5.8 5.5 7 L4.8 12 Q2.4 10.8 0 12.2 Z" fill="#2aa4f0"/><path d="M6.4 7 Q8.8 8.2 11.6 7 L10.9 12 Q8.2 13.2 5.7 12 Z" fill="#ffc030"/></g><text x="21.5" y="16" font-family="Liberation Sans" font-weight="bold" font-size="7" fill="#0000f0" text-anchor="end" stroke="#fff" stroke-width="1.2" paint-order="stroke" textLength="16.4" lengthAdjust="spacingAndGlyphs">S8R2</text></svg><svg class="r" style="left:1041px;top:267px" width="11" height="11" viewBox="0 0 11 11"><rect x="0" y="0" width="11" height="11" rx="2" fill="#3d9bf3"/><path d="M2.2 5.4 L4.6 7.9 L8.9 3" stroke="#fff" stroke-width="2.2" fill="none"/></svg><svg class="r" style="left:1059px;top:267px" width="17" height="14" viewBox="0 0 17 14"><rect x="0.5" y="1.5" width="10" height="8.5" rx="0.8" fill="#d0d0d0" stroke="#8c8c8c"/><rect x="2" y="3" width="7" height="5.5" fill="#3a90e0"/><rect x="2" y="3" width="7" height="2" fill="#6fb2f0"/><rect x="3" y="10.5" width="5" height="2" fill="#8a8a8a"/><rect x="10.5" y="0.5" width="5.5" height="11.5" rx="0.6" fill="#e4e4e4" stroke="#8c8c8c"/><path d="M11.5 2.2 H15 M11.5 4.2 H15" stroke="#a8a8a8" stroke-width="0.9"/><rect x="10.5" y="8" width="5.5" height="4" fill="#555"/><rect x="12.6" y="9.2" width="1.4" height="1.4" fill="#3ee03e"/></svg><div class="t " style="left:1078px;top:268px;font-size:11px;line-height:11px;color:#000;font-weight:normal;">Sun</div><svg class="r" style="left:1206px;top:268px" width="10" height="10" viewBox="0 0 10 10"><circle cx="5" cy="5" r="4.9" fill="#ffc62a"/></svg><svg class="r" style="left:1218px;top:264px" width="24" height="17" viewBox="0 0 24 17"><g transform="translate(5.5 1) scale(1.15)"><path d="M1.5 1.5 Q4 0 6.3 1.2 L5.6 6.2 Q3.3 5 0.8 6.4 Z" fill="#f0602a"/><path d="M7.2 1.4 Q9.6 2.6 12.5 1.2 L11.7 6.2 Q9 7.4 6.5 6.2 Z" fill="#80c23a"/><path d="M0.7 7.2 Q3.2 5.8 5.5 7 L4.8 12 Q2.4 10.8 0 12.2 Z" fill="#2aa4f0"/><path d="M6.4 7 Q8.8 8.2 11.6 7 L10.9 12 Q8.2 13.2 5.7 12 Z" fill="#ffc030"/></g><text x="21.5" y="16" font-family="Liberation Sans" font-weight="bold" font-size="7" fill="#0000f0" text-anchor="end" stroke="#fff" stroke-width="1.2" paint-order="stroke" textLength="16.4" lengthAdjust="spacingAndGlyphs">S8R2</text></svg><svg class="r" style="left:1041px;top:285px" width="11" height="11" viewBox="0 0 11 11"><rect x="0" y="0" width="11" height="11" rx="2" fill="#3d9bf3"/><path d="M2.2 5.4 L4.6 7.9 L8.9 3" stroke="#fff" stroke-width="2.2" fill="none"/></svg><svg class="r" style="left:1059px;top:285px" width="17" height="14" viewBox="0 0 17 14"><rect x="0.5" y="1.5" width="10" height="8.5" rx="0.8" fill="#d0d0d0" stroke="#8c8c8c"/><rect x="2" y="3" width="7" height="5.5" fill="#3a90e0"/><rect x="2" y="3" width="7" height="2" fill="#6fb2f0"/><rect x="3" y="10.5" width="5" height="2" fill="#8a8a8a"/><rect x="10.5" y="0.5" width="5.5" height="11.5" rx="0.6" fill="#e4e4e4" stroke="#8c8c8c"/><path d="M11.5 2.2 H15 M11.5 4.2 H15" stroke="#a8a8a8" stroke-width="0.9"/><rect x="10.5" y="8" width="5.5" height="4" fill="#555"/><rect x="12.6" y="9.2" width="1.4" height="1.4" fill="#3ee03e"/></svg><div class="t " style="left:1078px;top:286px;font-size:11px;line-height:11px;color:#000;font-weight:normal;">Uranus</div><svg class="r" style="left:1206px;top:286px" width="10" height="10" viewBox="0 0 10 10"><circle cx="5" cy="5" r="4.9" fill="#ffc62a"/></svg><svg class="r" style="left:1218px;top:282px" width="24" height="17" viewBox="0 0 24 17"><g transform="translate(7 2)" fill="#00a8ec"><path d="M0 2 L5.5 1.2 V6.8 H0 Z"/><path d="M6.5 1 L13.5 0 V6.8 H6.5 Z"/><path d="M0 7.8 H5.5 V13.4 L0 12.6 Z"/><path d="M6.5 7.8 H13.5 V14.4 L6.5 13.5 Z"/></g><text x="21.5" y="16" font-family="Liberation Sans" font-weight="bold" font-size="7" fill="#0000f0" text-anchor="end" stroke="#fff" stroke-width="1.2" paint-order="stroke" textLength="12.299999999999999" lengthAdjust="spacingAndGlyphs">8.1</text></svg><svg class="r" style="left:1041px;top:303px" width="11" height="11" viewBox="0 0 11 11"><rect x="0" y="0" width="11" height="11" rx="2" fill="#3d9bf3"/><path d="M2.2 5.4 L4.6 7.9 L8.9 3" stroke="#fff" stroke-width="2.2" fill="none"/></svg><svg class="r" style="left:1059px;top:303px" width="17" height="14" viewBox="0 0 17 14"><rect x="0.5" y="1.5" width="10" height="8.5" rx="0.8" fill="#d0d0d0" stroke="#8c8c8c"/><rect x="2" y="3" width="7" height="5.5" fill="#3a90e0"/><rect x="2" y="3" width="7" height="2" fill="#6fb2f0"/><rect x="3" y="10.5" width="5" height="2" fill="#8a8a8a"/><rect x="10.5" y="0.5" width="5.5" height="11.5" rx="0.6" fill="#e4e4e4" stroke="#8c8c8c"/><path d="M11.5 2.2 H15 M11.5 4.2 H15" stroke="#a8a8a8" stroke-width="0.9"/><rect x="10.5" y="8" width="5.5" height="4" fill="#555"/><rect x="12.6" y="9.2" width="1.4" height="1.4" fill="#3ee03e"/></svg><div class="t " style="left:1078px;top:304px;font-size:11px;line-height:11px;color:#000;font-weight:normal;">Venus</div><svg class="r" style="left:1206px;top:304px" width="10" height="10" viewBox="0 0 10 10"><circle cx="5" cy="5" r="4.9" fill="#fb4a4a"/></svg><svg class="r" style="left:1218px;top:300px" width="24" height="17" viewBox="0 0 24 17"><g transform="translate(5.5 1) scale(1.15)"><path d="M1.5 1.5 Q4 0 6.3 1.2 L5.6 6.2 Q3.3 5 0.8 6.4 Z" fill="#f0602a"/><path d="M7.2 1.4 Q9.6 2.6 12.5 1.2 L11.7 6.2 Q9 7.4 6.5 6.2 Z" fill="#80c23a"/><path d="M0.7 7.2 Q3.2 5.8 5.5 7 L4.8 12 Q2.4 10.8 0 12.2 Z" fill="#2aa4f0"/><path d="M6.4 7 Q8.8 8.2 11.6 7 L10.9 12 Q8.2 13.2 5.7 12 Z" fill="#ffc030"/></g><text x="21.5" y="16" font-family="Liberation Sans" font-weight="bold" font-size="7" fill="#0000f0" text-anchor="end" stroke="#fff" stroke-width="1.2" paint-order="stroke" textLength="4.1" lengthAdjust="spacingAndGlyphs">7</text></svg><svg class="r" style="left:1006px;top:322px" width="9" height="9" viewBox="0 0 9 9"><rect x="0.5" y="0.5" width="8" height="8" rx="1.5" fill="#fff" stroke="#7a9ad8"/><rect x="2" y="4" width="5" height="1.2" fill="#3a4a8a"/></svg><svg class="r" style="left:1023px;top:321px" width="11" height="11" viewBox="0 0 11 11"><rect x="0" y="0" width="11" height="11" rx="2" fill="#3d9bf3"/><path d="M2.2 5.4 L4.6 7.9 L8.9 3" stroke="#fff" stroke-width="2.2" fill="none"/></svg><svg class="r" style="left:1041px;top:321px" width="17" height="14" viewBox="0 0 17 14"><path d="M0.5 1 H6.5 L7.5 0.5 H12 L12.5 1 H13.5 V12.5 H0.5 Z" fill="#f0d088" stroke="#c8a04a" stroke-width="0.9"/><rect x="7.5" y="1.2" width="4.5" height="1.6" fill="#3cb4f0"/><rect x="2" y="2.5" width="10" height="3" fill="#f8e8c0"/><path d="M0.8 12.8 L2 6.5 H16 L14.2 12.8 Z" fill="#f4d898" stroke="#c8a04a" stroke-width="0.9"/></svg><div class="t " style="left:1060px;top:322px;font-size:11px;line-height:11px;color:#000;font-weight:normal;">Office #2 (Simpsons) <span style="color:#3d7fc0">(12)</span></div><svg class="r" style="left:1041px;top:339px" width="11" height="11" viewBox="0 0 11 11"><rect x="0" y="0" width="11" height="11" rx="2" fill="#3d9bf3"/><path d="M2.2 5.4 L4.6 7.9 L8.9 3" stroke="#fff" stroke-width="2.2" fill="none"/></svg><svg class="r" style="left:1059px;top:339px" width="17" height="14" viewBox="0 0 17 14"><rect x="0.5" y="1.5" width="10" height="8.5" rx="0.8" fill="#d0d0d0" stroke="#8c8c8c"/><rect x="2" y="3" width="7" height="5.5" fill="#3a90e0"/><rect x="2" y="3" width="7" height="2" fill="#6fb2f0"/><rect x="3" y="10.5" width="5" height="2" fill="#8a8a8a"/><rect x="10.5" y="0.5" width="5.5" height="11.5" rx="0.6" fill="#e4e4e4" stroke="#8c8c8c"/><path d="M11.5 2.2 H15 M11.5 4.2 H15" stroke="#a8a8a8" stroke-width="0.9"/><rect x="10.5" y="8" width="5.5" height="4" fill="#555"/><rect x="12.6" y="9.2" width="1.4" height="1.4" fill="#3ee03e"/></svg><div class="t " style="left:1078px;top:340px;font-size:11px;line-height:11px;color:#000;font-weight:normal;">Abracham Simpson</div><svg class="r" style="left:1206px;top:340px" width="10" height="10" viewBox="0 0 10 10"><circle cx="5" cy="5" r="4.9" fill="#fb4a4a"/></svg><svg class="r" style="left:1218px;top:336px" width="24" height="17" viewBox="0 0 24 17"><g transform="translate(5.5 1) scale(1.15)"><path d="M1.5 1.5 Q4 0 6.3 1.2 L5.6 6.2 Q3.3 5 0.8 6.4 Z" fill="#f0602a"/><path d="M7.2 1.4 Q9.6 2.6 12.5 1.2 L11.7 6.2 Q9 7.4 6.5 6.2 Z" fill="#80c23a"/><path d="M0.7 7.2 Q3.2 5.8 5.5 7 L4.8 12 Q2.4 10.8 0 12.2 Z" fill="#2aa4f0"/><path d="M6.4 7 Q8.8 8.2 11.6 7 L10.9 12 Q8.2 13.2 5.7 12 Z" fill="#ffc030"/></g><text x="21.5" y="16" font-family="Liberation Sans" font-weight="bold" font-size="7" fill="#0000f0" text-anchor="end" stroke="#fff" stroke-width="1.2" paint-order="stroke" textLength="8.2" lengthAdjust="spacingAndGlyphs">XP</text></svg><svg class="r" style="left:1041px;top:357px" width="11" height="11" viewBox="0 0 11 11"><rect x="0" y="0" width="11" height="11" rx="2" fill="#3d9bf3"/><path d="M2.2 5.4 L4.6 7.9 L8.9 3" stroke="#fff" stroke-width="2.2" fill="none"/></svg><svg class="r" style="left:1059px;top:357px" width="17" height="14" viewBox="0 0 17 14"><rect x="0.5" y="1.5" width="10" height="8.5" rx="0.8" fill="#d0d0d0" stroke="#8c8c8c"/><rect x="2" y="3" width="7" height="5.5" fill="#3a90e0"/><rect x="2" y="3" width="7" height="2" fill="#6fb2f0"/><rect x="3" y="10.5" width="5" height="2" fill="#8a8a8a"/><rect x="10.5" y="0.5" width="5.5" height="11.5" rx="0.6" fill="#e4e4e4" stroke="#8c8c8c"/><path d="M11.5 2.2 H15 M11.5 4.2 H15" stroke="#a8a8a8" stroke-width="0.9"/><rect x="10.5" y="8" width="5.5" height="4" fill="#555"/><rect x="12.6" y="9.2" width="1.4" height="1.4" fill="#3ee03e"/></svg><div class="t " style="left:1078px;top:358px;font-size:11px;line-height:11px;color:#000;font-weight:normal;"></div><svg class="r" style="left:1206px;top:358px" width="10" height="10" viewBox="0 0 10 10"><circle cx="5" cy="5" r="4.9" fill="#ffc62a"/></svg><svg class="r" style="left:1218px;top:354px" width="24" height="17" viewBox="0 0 24 17"><g transform="translate(5.5 1) scale(1.15)"><path d="M1.5 1.5 Q4 0 6.3 1.2 L5.6 6.2 Q3.3 5 0.8 6.4 Z" fill="#f0602a"/><path d="M7.2 1.4 Q9.6 2.6 12.5 1.2 L11.7 6.2 Q9 7.4 6.5 6.2 Z" fill="#80c23a"/><path d="M0.7 7.2 Q3.2 5.8 5.5 7 L4.8 12 Q2.4 10.8 0 12.2 Z" fill="#2aa4f0"/><path d="M6.4 7 Q8.8 8.2 11.6 7 L10.9 12 Q8.2 13.2 5.7 12 Z" fill="#ffc030"/></g><text x="21.5" y="16" font-family="Liberation Sans" font-weight="bold" font-size="7" fill="#0000f0" text-anchor="end" stroke="#fff" stroke-width="1.2" paint-order="stroke" textLength="4.1" lengthAdjust="spacingAndGlyphs">7</text></svg><svg class="r" style="left:1078px;top:356px" width="14" height="14" viewBox="0 0 14 14"><rect x="0.6" y="0.6" width="12.8" height="12.8" rx="2.2" fill="#8ec8f4" stroke="#24507e" stroke-width="1.2"/><path d="M1 8 H3.5 L4.5 10 L6 4 L7 9 L8 4 L9 6 L10 7 H13" stroke="#2a4a6a" fill="none" stroke-width="0.9"/></svg><div class="t " style="left:1096px;top:358px;font-size:11px;line-height:11px;color:#000;font-weight:normal;">Akira</div><svg class="r" style="left:1024px;top:376px" width="11" height="11" viewBox="0 0 11 11"><path d="M1.5 5.5 V10 H9.5 V5.5 L5.5 2 Z" fill="#f4e0d0" stroke="#b06030" stroke-width="0.8"/><path d="M0.5 6 L5.5 1 L10.5 6" stroke="#555" stroke-width="1.2" fill="none"/><rect x="4.2" y="6.5" width="2.6" height="3.5" fill="#c05a20"/></svg><svg class="r" style="left:1041px;top:375px" width="11" height="11" viewBox="0 0 11 11"><rect x="0" y="0" width="11" height="11" rx="2" fill="#3d9bf3"/><path d="M2.2 5.4 L4.6 7.9 L8.9 3" stroke="#fff" stroke-width="2.2" fill="none"/></svg><svg class="r" style="left:1059px;top:375px" width="17" height="14" viewBox="0 0 17 14"><rect x="0.5" y="1.5" width="10" height="8.5" rx="0.8" fill="#d0d0d0" stroke="#8c8c8c"/><rect x="2" y="3" width="7" height="5.5" fill="#3a90e0"/><rect x="2" y="3" width="7" height="2" fill="#6fb2f0"/><rect x="3" y="10.5" width="5" height="2" fill="#8a8a8a"/><rect x="10.5" y="0.5" width="5.5" height="11.5" rx="0.6" fill="#e4e4e4" stroke="#8c8c8c"/><path d="M11.5 2.2 H15 M11.5 4.2 H15" stroke="#a8a8a8" stroke-width="0.9"/><rect x="10.5" y="8" width="5.5" height="4" fill="#555"/><rect x="12.6" y="9.2" width="1.4" height="1.4" fill="#3ee03e"/></svg><div class="t " style="left:1078px;top:376px;font-size:11px;line-height:11px;color:#000;font-weight:normal;">Bart Simpson</div><svg class="r" style="left:1206px;top:376px" width="10" height="10" viewBox="0 0 10 10"><circle cx="5" cy="5" r="4.9" fill="#3cbc3c"/></svg><svg class="r" style="left:1218px;top:372px" width="24" height="17" viewBox="0 0 24 17"><g transform="translate(7 2)" fill="#00a8ec"><path d="M0 2 L5.5 1.2 V6.8 H0 Z"/><path d="M6.5 1 L13.5 0 V6.8 H6.5 Z"/><path d="M0 7.8 H5.5 V13.4 L0 12.6 Z"/><path d="M6.5 7.8 H13.5 V14.4 L6.5 13.5 Z"/></g><text x="21.5" y="16" font-family="Liberation Sans" font-weight="bold" font-size="7" fill="#0000f0" text-anchor="end" stroke="#fff" stroke-width="1.2" paint-order="stroke" textLength="8.2" lengthAdjust="spacingAndGlyphs">10</text></svg><svg class="r" style="left:1041px;top:393px" width="11" height="11" viewBox="0 0 11 11"><rect x="0" y="0" width="11" height="11" rx="2" fill="#3d9bf3"/><path d="M2.2 5.4 L4.6 7.9 L8.9 3" stroke="#fff" stroke-width="2.2" fill="none"/></svg><svg class="r" style="left:1059px;top:393px" width="17" height="14" viewBox="0 0 17 14"><rect x="0.5" y="1.5" width="10" height="8.5" rx="0.8" fill="#d0d0d0" stroke="#8c8c8c"/><rect x="2" y="3" width="7" height="5.5" fill="#3a90e0"/><rect x="2" y="3" width="7" height="2" fill="#6fb2f0"/><rect x="3" y="10.5" width="5" height="2" fill="#8a8a8a"/><rect x="10.5" y="0.5" width="5.5" height="11.5" rx="0.6" fill="#e4e4e4" stroke="#8c8c8c"/><path d="M11.5 2.2 H15 M11.5 4.2 H15" stroke="#a8a8a8" stroke-width="0.9"/><rect x="10.5" y="8" width="5.5" height="4" fill="#555"/><rect x="12.6" y="9.2" width="1.4" height="1.4" fill="#3ee03e"/></svg><div class="t " style="left:1078px;top:394px;font-size:11px;line-height:11px;color:#000;font-weight:normal;">Blinky</div><svg class="r" style="left:1206px;top:394px" width="10" height="10" viewBox="0 0 10 10"><circle cx="5" cy="5" r="4.9" fill="#fb4a4a"/></svg><svg class="r" style="left:1218px;top:390px" width="24" height="17" viewBox="0 0 24 17"><g transform="translate(7 2)" fill="#00a8ec"><path d="M0 2 L5.5 1.2 V6.8 H0 Z"/><path d="M6.5 1 L13.5 0 V6.8 H6.5 Z"/><path d="M0 7.8 H5.5 V13.4 L0 12.6 Z"/><path d="M6.5 7.8 H13.5 V14.4 L6.5 13.5 Z"/></g><text x="21.5" y="16" font-family="Liberation Sans" font-weight="bold" font-size="7" fill="#0000f0" text-anchor="end" stroke="#fff" stroke-width="1.2" paint-order="stroke" textLength="8.2" lengthAdjust="spacingAndGlyphs">10</text></svg><svg class="r" style="left:1041px;top:411px" width="11" height="11" viewBox="0 0 11 11"><rect x="0" y="0" width="11" height="11" rx="2" fill="#3d9bf3"/><path d="M2.2 5.4 L4.6 7.9 L8.9 3" stroke="#fff" stroke-width="2.2" fill="none"/></svg><svg class="r" style="left:1059px;top:411px" width="17" height="14" viewBox="0 0 17 14"><rect x="0.5" y="1.5" width="10" height="8.5" rx="0.8" fill="#d0d0d0" stroke="#8c8c8c"/><rect x="2" y="3" width="7" height="5.5" fill="#3a90e0"/><rect x="2" y="3" width="7" height="2" fill="#6fb2f0"/><rect x="3" y="10.5" width="5" height="2" fill="#8a8a8a"/><rect x="10.5" y="0.5" width="5.5" height="11.5" rx="0.6" fill="#e4e4e4" stroke="#8c8c8c"/><path d="M11.5 2.2 H15 M11.5 4.2 H15" stroke="#a8a8a8" stroke-width="0.9"/><rect x="10.5" y="8" width="5.5" height="4" fill="#555"/><rect x="12.6" y="9.2" width="1.4" height="1.4" fill="#3ee03e"/></svg><div class="t " style="left:1078px;top:412px;font-size:11px;line-height:11px;color:#000;font-weight:normal;">Charlie</div><svg class="r" style="left:1206px;top:412px" width="10" height="10" viewBox="0 0 10 10"><circle cx="5" cy="5" r="4.9" fill="#fb4a4a"/></svg><svg class="r" style="left:1218px;top:408px" width="24" height="17" viewBox="0 0 24 17"><g transform="translate(7 2)" fill="#00a8ec"><path d="M0 2 L5.5 1.2 V6.8 H0 Z"/><path d="M6.5 1 L13.5 0 V6.8 H6.5 Z"/><path d="M0 7.8 H5.5 V13.4 L0 12.6 Z"/><path d="M6.5 7.8 H13.5 V14.4 L6.5 13.5 Z"/></g><text x="21.5" y="16" font-family="Liberation Sans" font-weight="bold" font-size="7" fill="#0000f0" text-anchor="end" stroke="#fff" stroke-width="1.2" paint-order="stroke" textLength="8.2" lengthAdjust="spacingAndGlyphs">10</text></svg><svg class="r" style="left:1041px;top:429px" width="11" height="11" viewBox="0 0 11 11"><rect x="0" y="0" width="11" height="11" rx="2" fill="#3d9bf3"/><path d="M2.2 5.4 L4.6 7.9 L8.9 3" stroke="#fff" stroke-width="2.2" fill="none"/></svg><svg class="r" style="left:1059px;top:429px" width="17" height="14" viewBox="0 0 17 14"><rect x="0.5" y="1.5" width="10" height="8.5" rx="0.8" fill="#d0d0d0" stroke="#8c8c8c"/><rect x="2" y="3" width="7" height="5.5" fill="#3a90e0"/><rect x="2" y="3" width="7" height="2" fill="#6fb2f0"/><rect x="3" y="10.5" width="5" height="2" fill="#8a8a8a"/><rect x="10.5" y="0.5" width="5.5" height="11.5" rx="0.6" fill="#e4e4e4" stroke="#8c8c8c"/><path d="M11.5 2.2 H15 M11.5 4.2 H15" stroke="#a8a8a8" stroke-width="0.9"/><rect x="10.5" y="8" width="5.5" height="4" fill="#555"/><rect x="12.6" y="9.2" width="1.4" height="1.4" fill="#3ee03e"/></svg><div class="t " style="left:1078px;top:430px;font-size:11px;line-height:11px;color:#000;font-weight:normal;">Gloria</div><svg class="r" style="left:1206px;top:430px" width="10" height="10" viewBox="0 0 10 10"><circle cx="5" cy="5" r="4.9" fill="#ffc62a"/></svg><svg class="r" style="left:1218px;top:426px" width="24" height="17" viewBox="0 0 24 17"><g transform="translate(5.5 1) scale(1.15)"><path d="M1.5 1.5 Q4 0 6.3 1.2 L5.6 6.2 Q3.3 5 0.8 6.4 Z" fill="#f0602a"/><path d="M7.2 1.4 Q9.6 2.6 12.5 1.2 L11.7 6.2 Q9 7.4 6.5 6.2 Z" fill="#80c23a"/><path d="M0.7 7.2 Q3.2 5.8 5.5 7 L4.8 12 Q2.4 10.8 0 12.2 Z" fill="#2aa4f0"/><path d="M6.4 7 Q8.8 8.2 11.6 7 L10.9 12 Q8.2 13.2 5.7 12 Z" fill="#ffc030"/></g><text x="21.5" y="16" font-family="Liberation Sans" font-weight="bold" font-size="7" fill="#0000f0" text-anchor="end" stroke="#fff" stroke-width="1.2" paint-order="stroke" textLength="4.1" lengthAdjust="spacingAndGlyphs">V</text></svg><svg class="r" style="left:1041px;top:447px" width="11" height="11" viewBox="0 0 11 11"><rect x="0" y="0" width="11" height="11" rx="2" fill="#3d9bf3"/><path d="M2.2 5.4 L4.6 7.9 L8.9 3" stroke="#fff" stroke-width="2.2" fill="none"/></svg><svg class="r" style="left:1056px;top:445px" width="20" height="16" viewBox="0 0 20 16"><rect x="4.5" y="0.5" width="6" height="11" rx="0.6" fill="#e0e0e0" stroke="#8c8c8c"/><rect x="12.5" y="0.5" width="6" height="11" rx="0.6" fill="#e0e0e0" stroke="#8c8c8c"/><path d="M5.5 2.5 H9.5 M5.5 4.5 H9.5 M13.5 2.5 H17.5 M13.5 4.5 H17.5" stroke="#aaa" stroke-width="0.9"/><rect x="4" y="8" width="7" height="4" fill="#555"/><rect x="12" y="8" width="7" height="4" fill="#555"/><rect x="7" y="9" width="1.4" height="1.4" fill="#3ee03e"/><rect x="15" y="9" width="1.4" height="1.4" fill="#3ee03e"/><path d="M3.5 14.5 H19.5" stroke="#333" stroke-width="1.2"/><ellipse cx="7.5" cy="14.5" rx="2" ry="1.2" fill="#28b828"/><ellipse cx="15.5" cy="14.5" rx="2" ry="1.2" fill="#28b828"/></svg><div class="t " style="left:1078px;top:448px;font-size:11px;line-height:11px;color:#000;font-weight:normal;">Homer Simpson</div><svg class="r" style="left:1206px;top:448px" width="10" height="10" viewBox="0 0 10 10"><circle cx="5" cy="5" r="4.9" fill="#fb4a4a"/></svg><svg class="r" style="left:1218px;top:444px" width="24" height="17" viewBox="0 0 24 17"><g transform="translate(7 2)" fill="#00a8ec"><path d="M0 2 L5.5 1.2 V6.8 H0 Z"/><path d="M6.5 1 L13.5 0 V6.8 H6.5 Z"/><path d="M0 7.8 H5.5 V13.4 L0 12.6 Z"/><path d="M6.5 7.8 H13.5 V14.4 L6.5 13.5 Z"/></g><text x="21.5" y="16" font-family="Liberation Sans" font-weight="bold" font-size="7" fill="#0000f0" text-anchor="end" stroke="#fff" stroke-width="1.2" paint-order="stroke" textLength="20.5" lengthAdjust="spacingAndGlyphs">S12R2</text></svg><svg class="r" style="left:1041px;top:465px" width="11" height="11" viewBox="0 0 11 11"><rect x="0" y="0" width="11" height="11" rx="2" fill="#3d9bf3"/><path d="M2.2 5.4 L4.6 7.9 L8.9 3" stroke="#fff" stroke-width="2.2" fill="none"/></svg><svg class="r" style="left:1059px;top:465px" width="17" height="14" viewBox="0 0 17 14"><rect x="0.5" y="1.5" width="10" height="8.5" rx="0.8" fill="#d0d0d0" stroke="#8c8c8c"/><rect x="2" y="3" width="7" height="5.5" fill="#3a90e0"/><rect x="2" y="3" width="7" height="2" fill="#6fb2f0"/><rect x="3" y="10.5" width="5" height="2" fill="#8a8a8a"/><rect x="10.5" y="0.5" width="5.5" height="11.5" rx="0.6" fill="#e4e4e4" stroke="#8c8c8c"/><path d="M11.5 2.2 H15 M11.5 4.2 H15" stroke="#a8a8a8" stroke-width="0.9"/><rect x="10.5" y="8" width="5.5" height="4" fill="#555"/><rect x="12.6" y="9.2" width="1.4" height="1.4" fill="#3ee03e"/></svg><div class="t " style="left:1078px;top:466px;font-size:11px;line-height:11px;color:#000;font-weight:normal;"></div><svg class="r" style="left:1206px;top:466px" width="10" height="10" viewBox="0 0 10 10"><circle cx="5" cy="5" r="4.9" fill="#fb4a4a"/></svg><svg class="r" style="left:1218px;top:462px" width="24" height="17" viewBox="0 0 24 17"><g transform="translate(7 2)" fill="#00a8ec"><path d="M0 2 L5.5 1.2 V6.8 H0 Z"/><path d="M6.5 1 L13.5 0 V6.8 H6.5 Z"/><path d="M0 7.8 H5.5 V13.4 L0 12.6 Z"/><path d="M6.5 7.8 H13.5 V14.4 L6.5 13.5 Z"/></g><text x="21.5" y="16" font-family="Liberation Sans" font-weight="bold" font-size="7" fill="#0000f0" text-anchor="end" stroke="#fff" stroke-width="1.2" paint-order="stroke" textLength="8.2" lengthAdjust="spacingAndGlyphs">10</text></svg><svg class="r" style="left:1078px;top:464px" width="14" height="14" viewBox="0 0 14 14"><rect x="0.5" y="0.5" width="13" height="13" rx="2.5" fill="#ff9a10" stroke="#f08a00"/><rect x="0.5" y="0.5" width="13" height="6" rx="2.5" fill="#ffb830"/><rect x="2.8" y="3" width="2.6" height="8.5" rx="1.2" fill="#fff4e0"/><rect x="8.6" y="3" width="2.6" height="8.5" rx="1.2" fill="#fff4e0"/><path d="M4.5 3 L9.5 11.5" stroke="#ff8a00" stroke-width="2"/></svg><div class="t " style="left:1096px;top:466px;font-size:11px;line-height:11px;color:#000;font-weight:normal;">Lisa Simpson</div><svg class="r" style="left:1041px;top:483px" width="11" height="11" viewBox="0 0 11 11"><rect x="0" y="0" width="11" height="11" rx="2" fill="#3d9bf3"/><path d="M2.2 5.4 L4.6 7.9 L8.9 3" stroke="#fff" stroke-width="2.2" fill="none"/></svg><svg class="r" style="left:1059px;top:483px" width="17" height="14" viewBox="0 0 17 14"><rect x="0.5" y="1.5" width="10" height="8.5" rx="0.8" fill="#d0d0d0" stroke="#8c8c8c"/><rect x="2" y="3" width="7" height="5.5" fill="#3a90e0"/><rect x="2" y="3" width="7" height="2" fill="#6fb2f0"/><rect x="3" y="10.5" width="5" height="2" fill="#8a8a8a"/><rect x="10.5" y="0.5" width="5.5" height="11.5" rx="0.6" fill="#e4e4e4" stroke="#8c8c8c"/><path d="M11.5 2.2 H15 M11.5 4.2 H15" stroke="#a8a8a8" stroke-width="0.9"/><rect x="10.5" y="8" width="5.5" height="4" fill="#555"/><rect x="12.6" y="9.2" width="1.4" height="1.4" fill="#3ee03e"/></svg><div class="t " style="left:1078px;top:484px;font-size:11px;line-height:11px;color:#000;font-weight:normal;">Maggie Simpson</div><svg class="r" style="left:1206px;top:484px" width="10" height="10" viewBox="0 0 10 10"><circle cx="5" cy="5" r="4.9" fill="#fb4a4a"/></svg><svg class="r" style="left:1218px;top:480px" width="24" height="17" viewBox="0 0 24 17"><g transform="translate(5.5 1) scale(1.15)"><path d="M1.5 1.5 Q4 0 6.3 1.2 L5.6 6.2 Q3.3 5 0.8 6.4 Z" fill="#f0602a"/><path d="M7.2 1.4 Q9.6 2.6 12.5 1.2 L11.7 6.2 Q9 7.4 6.5 6.2 Z" fill="#80c23a"/><path d="M0.7 7.2 Q3.2 5.8 5.5 7 L4.8 12 Q2.4 10.8 0 12.2 Z" fill="#2aa4f0"/><path d="M6.4 7 Q8.8 8.2 11.6 7 L10.9 12 Q8.2 13.2 5.7 12 Z" fill="#ffc030"/></g><text x="21.5" y="16" font-family="Liberation Sans" font-weight="bold" font-size="7" fill="#0000f0" text-anchor="end" stroke="#fff" stroke-width="1.2" paint-order="stroke" textLength="4.1" lengthAdjust="spacingAndGlyphs">7</text></svg><svg class="r" style="left:1041px;top:501px" width="11" height="11" viewBox="0 0 11 11"><rect x="0" y="0" width="11" height="11" rx="2" fill="#3d9bf3"/><path d="M2.2 5.4 L4.6 7.9 L8.9 3" stroke="#fff" stroke-width="2.2" fill="none"/></svg><svg class="r" style="left:1056px;top:499px" width="20" height="16" viewBox="0 0 20 16"><rect x="4.5" y="0.5" width="6" height="11" rx="0.6" fill="#e0e0e0" stroke="#8c8c8c"/><rect x="12.5" y="0.5" width="6" height="11" rx="0.6" fill="#e0e0e0" stroke="#8c8c8c"/><path d="M5.5 2.5 H9.5 M5.5 4.5 H9.5 M13.5 2.5 H17.5 M13.5 4.5 H17.5" stroke="#aaa" stroke-width="0.9"/><rect x="4" y="8" width="7" height="4" fill="#555"/><rect x="12" y="8" width="7" height="4" fill="#555"/><rect x="7" y="9" width="1.4" height="1.4" fill="#3ee03e"/><rect x="15" y="9" width="1.4" height="1.4" fill="#3ee03e"/><path d="M3.5 14.5 H19.5" stroke="#333" stroke-width="1.2"/><ellipse cx="7.5" cy="14.5" rx="2" ry="1.2" fill="#28b828"/><ellipse cx="15.5" cy="14.5" rx="2" ry="1.2" fill="#28b828"/></svg><div class="t " style="left:1078px;top:502px;font-size:11px;line-height:11px;color:#000;font-weight:normal;">Marge Simpson</div><svg class="r" style="left:1206px;top:502px" width="10" height="10" viewBox="0 0 10 10"><circle cx="5" cy="5" r="4.9" fill="#fb4a4a"/></svg><svg class="r" style="left:1218px;top:498px" width="24" height="17" viewBox="0 0 24 17"><g transform="translate(7 2)" fill="#00a8ec"><path d="M0 2 L5.5 1.2 V6.8 H0 Z"/><path d="M6.5 1 L13.5 0 V6.8 H6.5 Z"/><path d="M0 7.8 H5.5 V13.4 L0 12.6 Z"/><path d="M6.5 7.8 H13.5 V14.4 L6.5 13.5 Z"/></g><text x="21.5" y="16" font-family="Liberation Sans" font-weight="bold" font-size="7" fill="#0000f0" text-anchor="end" stroke="#fff" stroke-width="1.2" paint-order="stroke" textLength="12.299999999999999" lengthAdjust="spacingAndGlyphs">S16</text></svg><svg class="r" style="left:1041px;top:519px" width="11" height="11" viewBox="0 0 11 11"><rect x="0" y="0" width="11" height="11" rx="2" fill="#3d9bf3"/><path d="M2.2 5.4 L4.6 7.9 L8.9 3" stroke="#fff" stroke-width="2.2" fill="none"/></svg><svg class="r" style="left:1059px;top:519px" width="17" height="14" viewBox="0 0 17 14"><rect x="0.5" y="1.5" width="10" height="8.5" rx="0.8" fill="#d0d0d0" stroke="#8c8c8c"/><rect x="2" y="3" width="7" height="5.5" fill="#3a90e0"/><rect x="2" y="3" width="7" height="2" fill="#6fb2f0"/><rect x="3" y="10.5" width="5" height="2" fill="#8a8a8a"/><rect x="10.5" y="0.5" width="5.5" height="11.5" rx="0.6" fill="#e4e4e4" stroke="#8c8c8c"/><path d="M11.5 2.2 H15 M11.5 4.2 H15" stroke="#a8a8a8" stroke-width="0.9"/><rect x="10.5" y="8" width="5.5" height="4" fill="#555"/><rect x="12.6" y="9.2" width="1.4" height="1.4" fill="#3ee03e"/></svg><div class="t " style="left:1078px;top:520px;font-size:11px;line-height:11px;color:#000;font-weight:normal;">Ms. Albright</div><svg class="r" style="left:1206px;top:520px" width="10" height="10" viewBox="0 0 10 10"><circle cx="5" cy="5" r="4.9" fill="#fb4a4a"/></svg><svg class="r" style="left:1218px;top:516px" width="24" height="17" viewBox="0 0 24 17"><g transform="translate(7 2)" fill="#00a8ec"><path d="M0 2 L5.5 1.2 V6.8 H0 Z"/><path d="M6.5 1 L13.5 0 V6.8 H6.5 Z"/><path d="M0 7.8 H5.5 V13.4 L0 12.6 Z"/><path d="M6.5 7.8 H13.5 V14.4 L6.5 13.5 Z"/></g><text x="21.5" y="16" font-family="Liberation Sans" font-weight="bold" font-size="7" fill="#0000f0" text-anchor="end" stroke="#fff" stroke-width="1.2" paint-order="stroke" textLength="4.1" lengthAdjust="spacingAndGlyphs">8</text></svg><svg class="r" style="left:1041px;top:537px" width="11" height="11" viewBox="0 0 11 11"><rect x="0" y="0" width="11" height="11" rx="2" fill="#3d9bf3"/><path d="M2.2 5.4 L4.6 7.9 L8.9 3" stroke="#fff" stroke-width="2.2" fill="none"/></svg><svg class="r" style="left:1059px;top:537px" width="17" height="14" viewBox="0 0 17 14"><rect x="0.5" y="1.5" width="10" height="8.5" rx="0.8" fill="#d0d0d0" stroke="#8c8c8c"/><rect x="2" y="3" width="7" height="5.5" fill="#3a90e0"/><rect x="2" y="3" width="7" height="2" fill="#6fb2f0"/><rect x="3" y="10.5" width="5" height="2" fill="#8a8a8a"/><rect x="10.5" y="0.5" width="5.5" height="11.5" rx="0.6" fill="#e4e4e4" stroke="#8c8c8c"/><path d="M11.5 2.2 H15 M11.5 4.2 H15" stroke="#a8a8a8" stroke-width="0.9"/><rect x="10.5" y="8" width="5.5" height="4" fill="#555"/><rect x="12.6" y="9.2" width="1.4" height="1.4" fill="#3ee03e"/></svg><div class="t " style="left:1078px;top:538px;font-size:11px;line-height:11px;color:#000;font-weight:normal;">Patty Bouvier</div><svg class="r" style="left:1206px;top:538px" width="10" height="10" viewBox="0 0 10 10"><circle cx="5" cy="5" r="4.9" fill="#fb4a4a"/></svg><svg class="r" style="left:1218px;top:534px" width="24" height="17" viewBox="0 0 24 17"><g transform="translate(7 2)" fill="#00a8ec"><path d="M0 2 L5.5 1.2 V6.8 H0 Z"/><path d="M6.5 1 L13.5 0 V6.8 H6.5 Z"/><path d="M0 7.8 H5.5 V13.4 L0 12.6 Z"/><path d="M6.5 7.8 H13.5 V14.4 L6.5 13.5 Z"/></g><text x="21.5" y="16" font-family="Liberation Sans" font-weight="bold" font-size="7" fill="#0000f0" text-anchor="end" stroke="#fff" stroke-width="1.2" paint-order="stroke" textLength="8.2" lengthAdjust="spacingAndGlyphs">10</text></svg><svg class="r" style="left:8px;top:780px" width="14" height="14" viewBox="0 0 14 14"><circle cx="7" cy="7" r="6.5" fill="#e2e2e2" stroke="#a6a6a6" stroke-width="1"/><path d="M2.125 4.725 L5.7 1.7999999999999998" stroke="#f0b8e0" stroke-width="1.6"/><path d="M8.95 11.875 L12.2 8.625" stroke="#bfe890" stroke-width="1.6"/><circle cx="7" cy="7" r="2.73" fill="#f6f6f6"/><circle cx="7" cy="7" r="1.5" fill="#fff" stroke="#8a8a8a" stroke-width="1"/></svg><div class="t " style="left:27px;top:782px;font-size:11px;line-height:11px;color:#000;font-weight:normal;">2</div><div class="r" style="left:38px;top:776px;width:1px;height:22px;background:#a0a0a0;"></div><svg class="r" style="left:48px;top:780px" width="11" height="14" viewBox="0 0 11 14"><defs><linearGradient id="gg" x1="0" y1="0" x2="0" y2="1"><stop offset="0" stop-color="#4a4a4a"/><stop offset="0.6" stop-color="#6a6a6a"/><stop offset="1" stop-color="#c8c8c8"/></linearGradient></defs><path d="M0 5.5 A5.5 5.5 0 0 1 11 5.5 V13.5 L9.5 12.5 L8 13.5 L6.5 12.5 L5 13.5 L3.5 12.5 L2 13.5 L0 12.5 Z" fill="url(#gg)"/><rect x="2.5" y="4" width="1.6" height="2.2" fill="#fff"/><rect x="6.8" y="4" width="1.6" height="2.2" fill="#fff"/></svg><div class="t " style="left:67px;top:782px;font-size:11px;line-height:11px;color:#000;font-weight:normal;">1</div><svg class="r" style="left:80px;top:780px" width="14" height="15" viewBox="0 0 14 15"><rect x="0" y="0" width="14" height="15" fill="#3a3a3a"/><g fill="#ddd"><rect x="0.8" y="1.5" width="1.4" height="1.4"/><rect x="0.8" y="4.5" width="1.4" height="1.4"/><rect x="0.8" y="7.5" width="1.4" height="1.4"/><rect x="0.8" y="10.5" width="1.4" height="1.4"/><rect x="11.8" y="1.5" width="1.4" height="1.4"/><rect x="11.8" y="4.5" width="1.4" height="1.4"/><rect x="11.8" y="7.5" width="1.4" height="1.4"/><rect x="11.8" y="10.5" width="1.4" height="1.4"/></g><rect x="3" y="1" width="8" height="6" fill="#6a9ad8"/><rect x="3" y="8" width="8" height="6" fill="#6a9ad8"/></svg><div class="t " style="left:98px;top:782px;font-size:11px;line-height:11px;color:#000;font-weight:normal;">0</div><svg class="r" style="left:113px;top:780px" width="16" height="15" viewBox="0 0 16 15"><g fill="#5aaee0" stroke="#3a8ac8" stroke-width="0.8"><rect x="4.5" y="0.5" width="6" height="7" rx="1"/><rect x="0.5" y="6" width="6" height="8.5" rx="1"/><rect x="8.5" y="6.5" width="6.5" height="8" rx="1"/></g></svg><div class="t " style="left:131px;top:782px;font-size:11px;line-height:11px;color:#000;font-weight:normal;">0</div><svg class="r" style="left:1112px;top:779px" width="16" height="16" viewBox="0 0 16 16"><rect x="2.5" y="1.5" width="10.5" height="8.5" rx="1" fill="#d4d4d4" stroke="#8a8a8a"/><rect x="4" y="3" width="7.5" height="5.5" fill="#3a8ad8"/><rect x="6" y="10.5" width="3.5" height="2" fill="#999"/><ellipse cx="7.7" cy="14" rx="7" ry="1" fill="#222"/><circle cx="7.7" cy="14" r="1.5" fill="#28b828"/></svg><div class="t " style="left:1130px;top:782px;font-size:11px;line-height:11px;color:#000;font-weight:normal;">21</div><div class="r" style="left:1148px;top:776px;width:1px;height:22px;background:#a0a0a0;"></div><svg class="r" style="left:1156px;top:779px" width="16" height="16" viewBox="0 0 16 16"><rect x="3.5" y="1.5" width="10.5" height="8.5" rx="1" fill="#d8e8fa" stroke="#3a7fd8" stroke-dasharray="2 1.4" stroke-width="1"/><path d="M8.7 10.5 V13" stroke="#3a7fd8" stroke-dasharray="1.5 1"/><ellipse cx="8.7" cy="14" rx="7" ry="1" fill="#222"/><circle cx="8.7" cy="14" r="1.5" fill="#28b828"/></svg><div class="t " style="left:1175px;top:782px;font-size:11px;line-height:11px;color:#000;font-weight:normal;">0</div><div class="r" style="left:1187px;top:776px;width:1px;height:22px;background:#a0a0a0;"></div><svg class="r" style="left:1195px;top:781px" width="16" height="13" viewBox="0 0 16 13"><rect x="0.5" y="0.5" width="15" height="12" rx="1.5" fill="#ffd040" stroke="#e8a018"/><circle cx="3.8" cy="4.2" r="1.5" fill="none" stroke="#6a5a3a" stroke-width="0.9"/><path d="M5.3 4.2 H9 M8 4.2 V5.5" stroke="#6a5a3a" stroke-width="0.9"/><path d="M11 4 H14" stroke="#6a5a3a" stroke-dasharray="1 1"/><path d="M2 9 H14" stroke="#6a5a3a" stroke-dasharray="1 0.8" stroke-width="1.5"/></svg><div class="t " style="left:1216px;top:781px;font-size:13px;line-height:13px;color:#000;font-weight:normal;">∞</div><div class="r" style="left:0;top:0;width:1242px;height:799px;border:1px solid #000;background:transparent"></div>
</body></html>
